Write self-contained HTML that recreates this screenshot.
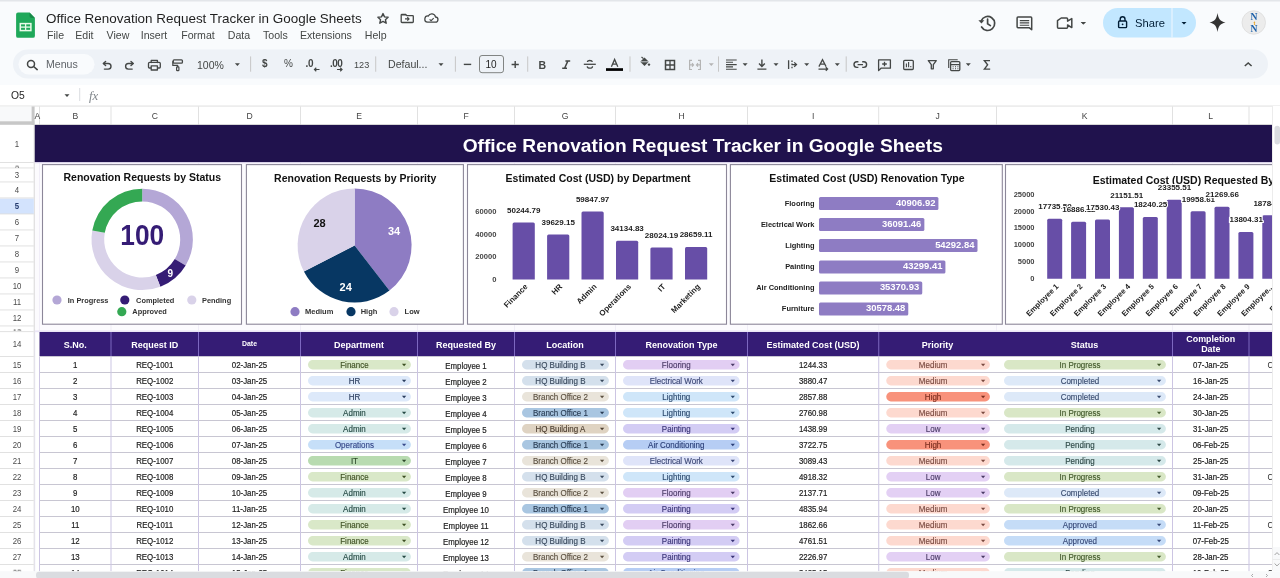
<!DOCTYPE html><html><head><meta charset="utf-8"><style>
*{margin:0;padding:0;box-sizing:border-box}
html,body{width:1280px;height:578px;overflow:hidden;background:#f9fbfd;font-family:"Liberation Sans",sans-serif;position:relative}
.a{position:absolute;white-space:nowrap}
svg{position:absolute;left:0;top:0;will-change:transform}

</style></head><body>
<svg width="1280" height="84" style="left:0;top:0">
<rect x="0" y="0" width="1280" height="1.5" fill="#e3e6ea"/>
<path d="M18 12.5 h11.5 l5.4 5.4 v18 a1.9 1.9 0 0 1 -1.9 1.9 h-15 a1.9 1.9 0 0 1 -1.9 -1.9 v-21.5 a1.9 1.9 0 0 1 1.9 -1.9z" fill="#1fa85a"/>
<path d="M29.5 12.5 l5.4 5.4 h-3.6 a1.8 1.8 0 0 1 -1.8 -1.8z" fill="#178a48"/>
<rect x="20.3" y="23.6" width="10.6" height="7" fill="none" stroke="#e9fbe9" stroke-width="1.5"/>
<line x1="20.3" y1="27.1" x2="30.9" y2="27.1" stroke="#e9fbe9" stroke-width="1.3"/>
<line x1="25.6" y1="23.6" x2="25.6" y2="30.6" stroke="#e9fbe9" stroke-width="1.3"/>
<path d="M383 13.6 l1.5 3.3 3.6.4 -2.7 2.4 .8 3.5 -3.2-1.8 -3.2 1.8 .8-3.5 -2.7-2.4 3.6-.4z" fill="none" stroke="#444746" stroke-width="1.4" stroke-linejoin="round"/>
<path d="M402 14.3 h3.6 l1.3 1.3 h5.6 a0.8 0.8 0 0 1 0.8 0.8 v5.3 a0.8 0.8 0 0 1 -0.8 0.8 h-10.5 a0.8 0.8 0 0 1 -0.8 -0.8 v-6.6 a0.8 0.8 0 0 1 0.8 -0.8z" fill="none" stroke="#444746" stroke-width="1.3"/>
<path d="M401.6 14.3 h4 l1.3 1.3 h-5.3z" fill="#444746"/>
<path d="M405 18.9 h3.8 M407.3 17.2 l1.7 1.7 -1.7 1.7" fill="none" stroke="#444746" stroke-width="1.2"/>
<path d="M427.6 22.2 h7.6 a2.6 2.6 0 0 0 0.3 -5.2 a3.8 3.8 0 0 0 -7.2 -1 a3 3 0 0 0 -0.7 6.2z" fill="none" stroke="#444746" stroke-width="1.3"/>
<path d="M429.6 19.3 l1.5 1.4 2.6 -2.6" fill="none" stroke="#444746" stroke-width="1.1"/>
<g fill="none" stroke="#444746" stroke-width="1.7" stroke-linecap="round">
<path d="M981.2 20.8 A7 7 0 1 1 981.6 27"/><path d="M987.6 19.2 v4.6 l2.8 1.8"/>
</g>
<path d="M978.4 20.2 l3 3.4 3 -3.4z" fill="#444746"/>
<path d="M1018 17 h12.8 a0.9 0.9 0 0 1 0.9 0.9 v11.8 l-2.6 -2 h-11.1 a0.9 0.9 0 0 1 -0.9 -0.9 v-8.9 a0.9 0.9 0 0 1 0.9 -0.9z" fill="none" stroke="#444746" stroke-width="1.5" stroke-linejoin="round"/>
<path d="M1019.8 20.6 h9.4 M1019.8 22.9 h9.4 M1019.8 25.2 h9.4" stroke="#444746" stroke-width="1.1"/>
<path d="M1061.2 18 h5.4 a1 1 0 0 1 1 1 v2.2 l4.2 -2.6 v9 l-4.2 -2.6 v2.2 a1 1 0 0 1 -1 1 h-8.1 a1 1 0 0 1 -1 -1 v-6.5z" fill="none" stroke="#444746" stroke-width="1.5" stroke-linejoin="round"/>
<path d="M1081 22 h5 l-2.5 2.6z" fill="#444746"/>
<rect x="1103" y="8" width="93" height="29.5" rx="14.75" fill="#c2e7ff"/>
<rect x="1171.5" y="8" width="1" height="29.5" fill="#f0f8ff"/>
<path d="M1120.2 21 v-1.8 a2.4 2.4 0 0 1 4.8 0 v1.8" fill="none" stroke="#001d35" stroke-width="1.4"/>
<rect x="1118.6" y="21" width="8" height="6.6" rx="0.9" fill="none" stroke="#001d35" stroke-width="1.4"/>
<circle cx="1122.6" cy="24.3" r="0.9" fill="#001d35"/>
<path d="M1181.5 22 h5 l-2.5 2.6z" fill="#001d35"/>
<path d="M1217.5 13 C1218.5 19 1220 21 1225.5 22.5 C1220 24 1218.5 26 1217.5 32 C1216.5 26 1215 24 1209.5 22.5 C1215 21 1216.5 19 1217.5 13z" fill="#333"/>
<circle cx="1253.75" cy="22.5" r="11.75" fill="#ececec"/>
<circle cx="1253.75" cy="22.5" r="11.75" fill="none" stroke="#dcdcdc" stroke-width="0.8"/>
<text x="1254" y="19.6" font-family="Liberation Serif" font-weight="bold" font-size="9.6" fill="#1b5fa8" text-anchor="middle">N</text>
<text x="1254.3" y="24.6" font-family="Liberation Sans" font-weight="bold" font-size="5.5" fill="#e9a21b" text-anchor="middle">t</text>
<text x="1254" y="32.4" font-family="Liberation Serif" font-weight="bold" font-size="9.6" fill="#1b5fa8" text-anchor="middle">N</text>
<rect x="13" y="49.5" width="1255" height="29" rx="14.5" fill="#eef2f7"/>
<rect x="18.5" y="54" width="76" height="20.5" rx="10.25" fill="#f9fbfd"/>
<g fill="none" stroke="#444746" stroke-width="1.4" stroke-linecap="round" stroke-linejoin="round">
<circle cx="31" cy="63.9" r="3.5" stroke-width="1.5"/><path d="M33.6 66.5 L37.2 69.6" stroke-width="1.6"/>
<path d="M104 63.5 h4.2 a2.8 2.8 0 0 1 0 5.6 h-3.8"/><path d="M105.6 61.4 l-2.3 2.1 2.3 2.1"/>
<path d="M132.6 63.5 h-4.2 a2.8 2.8 0 0 0 0 5.6 h3.8"/><path d="M131 61.4 l2.3 2.1 -2.3 2.1"/>
<path d="M151.2 62.6 v-2.2 h6.2 v2.2" stroke-width="1.3"/>
<path d="M150.6 68 h-1.2 a0.9 0.9 0 0 1 -0.9 -0.9 v-3.6 a1.2 1.2 0 0 1 1.2 -1.2 h9.4 a1.2 1.2 0 0 1 1.2 1.2 v3.6 a0.9 0.9 0 0 1 -0.9 0.9 h-1.2" stroke-width="1.3"/>
<rect x="151.2" y="65.8" width="6.2" height="4.2" stroke-width="1.3"/>
<rect x="173.2" y="59.8" width="9.2" height="3.3" rx="0.9" stroke-width="1.3"/>
<path d="M173.2 61.5 h-0.4 v3.9 h4.9 v1.3" stroke-width="1.2"/>
<rect x="176.6" y="66.8" width="2.3" height="3.8" rx="0.6" stroke-width="1.2"/>
</g>
<rect x="250.1" y="56.4" width="1" height="15.3" fill="#c7c7c7"/>
<rect x="375.2" y="56.4" width="1" height="15.3" fill="#c7c7c7"/>
<rect x="454.9" y="56.4" width="1" height="15.3" fill="#c7c7c7"/>
<rect x="527.2" y="56.4" width="1" height="15.3" fill="#c7c7c7"/>
<rect x="629.5" y="56.4" width="1" height="15.3" fill="#c7c7c7"/>
<rect x="718.0" y="56.4" width="1" height="15.3" fill="#c7c7c7"/>
<rect x="845.7" y="56.4" width="1" height="15.3" fill="#c7c7c7"/>
<path d="M234.9 63.3 h5 l-2.5 2.6z" fill="#444746"/>
<path d="M438.5 63.3 h5 l-2.5 2.6z" fill="#444746"/>
<path d="M708.8 63.3 h5 l-2.5 2.6z" fill="#b4b4b4"/>
<path d="M742.6 63.3 h5 l-2.5 2.6z" fill="#444746"/>
<path d="M773.5 63.3 h5 l-2.5 2.6z" fill="#444746"/>
<path d="M804.2 63.3 h5 l-2.5 2.6z" fill="#444746"/>
<path d="M834.8 63.3 h5 l-2.5 2.6z" fill="#444746"/>
<path d="M965.8 63.3 h5 l-2.5 2.6z" fill="#444746"/>
<path d="M1080.7 22 h5 l-2.5 2.6z" fill="#444746"/>
<rect x="479.5" y="55.5" width="24" height="17.2" rx="2.5" fill="none" stroke="#747775" stroke-width="0.9"/>
<path d="M463.8 64.4 h7.4" stroke="#444746" stroke-width="1.4"/>
<path d="M511.6 64.5 h7.2 M515.2 60.9 v7.2" stroke="#444746" stroke-width="1.4"/>
<path d="M565.4 60.9 h4.8 M562.2 68.3 h4.8 M567.9 60.9 l-3.3 7.4" fill="none" stroke="#444746" stroke-width="1.5"/>
<path d="M583.8 64.3 h12" stroke="#444746" stroke-width="1.3"/>
<path d="M592.4 61.8 c-0.4 -1.6 -5 -2 -5 0.3 M587.2 66.4 c0.2 2.4 5.6 2.4 5.3 -0.2" fill="none" stroke="#444746" stroke-width="1.3"/>
<rect x="606" y="68.2" width="17" height="2.7" fill="#000"/>
<path d="M611.4 66.8 l3.2 -7.4 l3.2 7.4 M612.6 64.2 h4" fill="none" stroke="#444746" stroke-width="1.3"/>
<path d="M640.2 61.8 l4.3 -4.3 l4.3 4.3 l-4.3 4.3z" fill="#444746"/><path d="M640.2 61.8 h8.6" stroke="#eef2f7" stroke-width="0.8"/><circle cx="649" cy="64.6" r="1.2" fill="#444746"/>
<path d="M641.5 57 l2 1.6" stroke="#444746" stroke-width="1.2"/>
<rect x="665.5" y="60.5" width="9" height="9" fill="none" stroke="#444746" stroke-width="1.5"/><path d="M670 60.5 v9 M665.5 65 h9" stroke="#444746" stroke-width="1.3"/>
<g fill="none" stroke="#b4b4b4" stroke-width="1.2"><path d="M692 60.3 h-2.4 v9.2 h2.4 M698 60.3 h2.4 v9.2 h-2.4"/><path d="M689.8 64.9 h3.4 M692 63.2 l1.5 1.7 -1.5 1.7 M700.2 64.9 h-3.4 M698 63.2 l-1.5 1.7 1.5 1.7"/></g>
<path d="M726 60 h10.7 M726 62.3 h7 M726 64.6 h10.7 M726 66.9 h7 M726 69.2 h10.7" stroke="#444746" stroke-width="1.1"/>
<path d="M761.9 59.6 v6.5 M759 63.6 l2.9 2.9 2.9 -2.9 M757.4 69.1 h9" fill="none" stroke="#444746" stroke-width="1.4"/>
<path d="M788.6 60.3 v8.7 M792 60.5 v1.6 M792 63.5 v1.6 M792 66.7 v1.6 M791.5 64.6 h4.8 M794.2 62.4 l2.3 2.2 -2.3 2.2" fill="none" stroke="#444746" stroke-width="1.3"/>
<path d="M818.9 66.6 l3.6 -7 l3.6 7 M820.2 64 h4.6 M818.5 69 h8.8 M825.8 67.3 l1.8 1.7 -1.8 1.7" fill="none" stroke="#444746" stroke-width="1.25"/>
<path d="M858.4 61.8 h-1.6 a2.8 2.8 0 0 0 0 5.6 h1.6 M862.2 61.8 h1.6 a2.8 2.8 0 0 1 0 5.6 h-1.6 M857.6 64.6 h5.4" fill="none" stroke="#444746" stroke-width="1.4"/>
<path d="M878.6 59.8 h11.8 v8.4 h-9.4 l-2.4 2.4z" fill="none" stroke="#444746" stroke-width="1.3" stroke-linejoin="round"/><path d="M884.5 61.7 v4.6 M882.2 64 h4.6" stroke="#444746" stroke-width="1.3"/>
<rect x="903.7" y="60.3" width="9.6" height="9.2" rx="1" fill="none" stroke="#444746" stroke-width="1.3"/><path d="M906.4 63.5 v3.8 M908.6 62 v5.3 M910.8 66 v1.3" stroke="#444746" stroke-width="1.1"/>
<path d="M928.3 60.6 h8 l-3 4 v4.2 h-2 v-4.2z" fill="none" stroke="#444746" stroke-width="1.3" stroke-linejoin="round"/>
<path d="M948.7 68 v-8.3 h9" fill="none" stroke="#444746" stroke-width="1.1"/><rect x="950.6" y="61.6" width="9.2" height="9" rx="1" fill="none" stroke="#444746" stroke-width="1.3"/><path d="M950.6 64.6 h9.2 M952.6 66.8 h1 M955 66.8 h1 M957.4 66.8 h1 M952.6 68.8 h1 M955 68.8 h1 M957.4 68.8 h1" stroke="#444746" stroke-width="1.1"/>
<path d="M990 60.6 h-5.6 l3.2 4.2 -3.2 4.3 h5.8" fill="none" stroke="#444746" stroke-width="1.4"/>
<path d="M1244.8 66 l3.4 -3 3.4 3" fill="none" stroke="#444746" stroke-width="1.5"/>
</svg>
<svg width="1280" height="578" style="left:0;top:0">
<rect x="0" y="85" width="1280" height="21" fill="#ffffff"/>
<rect x="79.2" y="88" width="1" height="13" fill="#dadce0"/>
<path d="M64.5 94.3 h5 l-2.5 2.6z" fill="#444746"/>
<text x="11" y="98.6" font-family="Liberation Sans" font-size="10.3" fill="#1f1f1f">O5</text>
<text x="89" y="99.5" font-family="Liberation Serif" font-style="italic" font-size="12.8" fill="#80868b">fx</text>
<rect x="0" y="106" width="1272" height="19" fill="#ffffff"/>
<rect x="0" y="105.6" width="1280" height="0.9" fill="#dcdcdc"/>
<rect x="0" y="106.5" width="31.6" height="15" fill="#f8f9fa"/>
<rect x="0" y="121.3" width="34.3" height="3.5" fill="#c7c7c7"/>
<rect x="31.6" y="106.5" width="3" height="18.3" fill="#c7c7c7"/>
<rect x="39.1" y="106.5" width="0.8" height="18.5" fill="#dadada"/>
<rect x="110.6" y="106.5" width="0.8" height="18.5" fill="#dadada"/>
<rect x="198.1" y="106.5" width="0.8" height="18.5" fill="#dadada"/>
<rect x="300.1" y="106.5" width="0.8" height="18.5" fill="#dadada"/>
<rect x="417.1" y="106.5" width="0.8" height="18.5" fill="#dadada"/>
<rect x="514.1" y="106.5" width="0.8" height="18.5" fill="#dadada"/>
<rect x="615.1" y="106.5" width="0.8" height="18.5" fill="#dadada"/>
<rect x="747.1" y="106.5" width="0.8" height="18.5" fill="#dadada"/>
<rect x="878.35" y="106.5" width="0.8" height="18.5" fill="#dadada"/>
<rect x="996.1" y="106.5" width="0.8" height="18.5" fill="#dadada"/>
<rect x="1172.1" y="106.5" width="0.8" height="18.5" fill="#dadada"/>
<rect x="1248.6" y="106.5" width="0.8" height="18.5" fill="#dadada"/>
<text x="37.4" y="118.8" font-family="Liberation Sans" font-size="8.6" fill="#444" text-anchor="middle">A</text>
<text x="75.25" y="118.8" font-family="Liberation Sans" font-size="8.6" fill="#444" text-anchor="middle">B</text>
<text x="154.75" y="118.8" font-family="Liberation Sans" font-size="8.6" fill="#444" text-anchor="middle">C</text>
<text x="249.5" y="118.8" font-family="Liberation Sans" font-size="8.6" fill="#444" text-anchor="middle">D</text>
<text x="359.0" y="118.8" font-family="Liberation Sans" font-size="8.6" fill="#444" text-anchor="middle">E</text>
<text x="466.0" y="118.8" font-family="Liberation Sans" font-size="8.6" fill="#444" text-anchor="middle">F</text>
<text x="565.0" y="118.8" font-family="Liberation Sans" font-size="8.6" fill="#444" text-anchor="middle">G</text>
<text x="681.5" y="118.8" font-family="Liberation Sans" font-size="8.6" fill="#444" text-anchor="middle">H</text>
<text x="813.125" y="118.8" font-family="Liberation Sans" font-size="8.6" fill="#444" text-anchor="middle">I</text>
<text x="937.625" y="118.8" font-family="Liberation Sans" font-size="8.6" fill="#444" text-anchor="middle">J</text>
<text x="1084.5" y="118.8" font-family="Liberation Sans" font-size="8.6" fill="#444" text-anchor="middle">K</text>
<text x="1210.75" y="118.8" font-family="Liberation Sans" font-size="8.6" fill="#444" text-anchor="middle">L</text>
<text x="1294.5" y="118.8" font-family="Liberation Sans" font-size="8.6" fill="#444" text-anchor="middle"></text>
<rect x="34.3" y="124.3" width="1238" height="0.8" fill="#c7c7c7"/>
<rect x="0" y="125" width="34.3" height="446.3" fill="#ffffff"/>
<rect x="33.8" y="125" width="1" height="446.3" fill="#c7c7c7"/>
<rect x="0" y="198.5" width="33.8" height="15.5" fill="#d3e3fd"/>
<rect x="0" y="162.0" width="33.8" height="0.9" fill="#dedede"/>
<text transform="translate(17 146.85) scale(0.85 1)" font-family="Liberation Sans" font-size="9.2" fill="#4a4a4a" text-anchor="middle">1</text>
<rect x="0" y="167.5" width="33.8" height="0.9" fill="#dedede"/>
<svg x="0" y="162.5" width="33.8" height="5.0"><text transform="translate(17 9.10) scale(0.85 1)" font-family="Liberation Sans" font-size="9.2" fill="#4a4a4a" text-anchor="middle">2</text></svg>
<rect x="0" y="181.5" width="33.8" height="0.9" fill="#dedede"/>
<text transform="translate(17 178.10) scale(0.85 1)" font-family="Liberation Sans" font-size="9.2" fill="#4a4a4a" text-anchor="middle">3</text>
<rect x="0" y="197.5" width="33.8" height="0.9" fill="#dedede"/>
<text transform="translate(17 193.10) scale(0.85 1)" font-family="Liberation Sans" font-size="9.2" fill="#4a4a4a" text-anchor="middle">4</text>
<rect x="0" y="213.5" width="33.8" height="0.9" fill="#dedede"/>
<text transform="translate(17 209.10) scale(0.85 1)" font-family="Liberation Sans" font-size="9.2" fill="#233a6e" text-anchor="middle" font-weight="bold">5</text>
<rect x="0" y="229.5" width="33.8" height="0.9" fill="#dedede"/>
<text transform="translate(17 225.10) scale(0.85 1)" font-family="Liberation Sans" font-size="9.2" fill="#4a4a4a" text-anchor="middle">6</text>
<rect x="0" y="245.5" width="33.8" height="0.9" fill="#dedede"/>
<text transform="translate(17 241.10) scale(0.85 1)" font-family="Liberation Sans" font-size="9.2" fill="#4a4a4a" text-anchor="middle">7</text>
<rect x="0" y="261.5" width="33.8" height="0.9" fill="#dedede"/>
<text transform="translate(17 257.10) scale(0.85 1)" font-family="Liberation Sans" font-size="9.2" fill="#4a4a4a" text-anchor="middle">8</text>
<rect x="0" y="277.5" width="33.8" height="0.9" fill="#dedede"/>
<text transform="translate(17 273.10) scale(0.85 1)" font-family="Liberation Sans" font-size="9.2" fill="#4a4a4a" text-anchor="middle">9</text>
<rect x="0" y="293.5" width="33.8" height="0.9" fill="#dedede"/>
<text transform="translate(17 289.10) scale(0.85 1)" font-family="Liberation Sans" font-size="9.2" fill="#4a4a4a" text-anchor="middle">10</text>
<rect x="0" y="309.5" width="33.8" height="0.9" fill="#dedede"/>
<text transform="translate(17 305.10) scale(0.85 1)" font-family="Liberation Sans" font-size="9.2" fill="#4a4a4a" text-anchor="middle">11</text>
<rect x="0" y="325.5" width="33.8" height="0.9" fill="#dedede"/>
<text transform="translate(17 321.10) scale(0.85 1)" font-family="Liberation Sans" font-size="9.2" fill="#4a4a4a" text-anchor="middle">12</text>
<rect x="0" y="331.2" width="33.8" height="0.9" fill="#dedede"/>
<svg x="0" y="326" width="33.8" height="5.199999999999989"><text transform="translate(17 9.30) scale(0.85 1)" font-family="Liberation Sans" font-size="9.2" fill="#4a4a4a" text-anchor="middle">13</text></svg>
<rect x="0" y="356.0" width="33.8" height="0.9" fill="#dedede"/>
<text transform="translate(17 347.20) scale(0.85 1)" font-family="Liberation Sans" font-size="9.2" fill="#4a4a4a" text-anchor="middle">14</text>
<rect x="0" y="372.0" width="33.8" height="0.9" fill="#dedede"/>
<text transform="translate(17 367.60) scale(0.85 1)" font-family="Liberation Sans" font-size="9.2" fill="#4a4a4a" text-anchor="middle">15</text>
<rect x="0" y="388.0" width="33.8" height="0.9" fill="#dedede"/>
<text transform="translate(17 383.60) scale(0.85 1)" font-family="Liberation Sans" font-size="9.2" fill="#4a4a4a" text-anchor="middle">16</text>
<rect x="0" y="404.0" width="33.8" height="0.9" fill="#dedede"/>
<text transform="translate(17 399.60) scale(0.85 1)" font-family="Liberation Sans" font-size="9.2" fill="#4a4a4a" text-anchor="middle">17</text>
<rect x="0" y="420.0" width="33.8" height="0.9" fill="#dedede"/>
<text transform="translate(17 415.60) scale(0.85 1)" font-family="Liberation Sans" font-size="9.2" fill="#4a4a4a" text-anchor="middle">18</text>
<rect x="0" y="436.0" width="33.8" height="0.9" fill="#dedede"/>
<text transform="translate(17 431.60) scale(0.85 1)" font-family="Liberation Sans" font-size="9.2" fill="#4a4a4a" text-anchor="middle">19</text>
<rect x="0" y="452.0" width="33.8" height="0.9" fill="#dedede"/>
<text transform="translate(17 447.60) scale(0.85 1)" font-family="Liberation Sans" font-size="9.2" fill="#4a4a4a" text-anchor="middle">20</text>
<rect x="0" y="468.0" width="33.8" height="0.9" fill="#dedede"/>
<text transform="translate(17 463.60) scale(0.85 1)" font-family="Liberation Sans" font-size="9.2" fill="#4a4a4a" text-anchor="middle">21</text>
<rect x="0" y="484.0" width="33.8" height="0.9" fill="#dedede"/>
<text transform="translate(17 479.60) scale(0.85 1)" font-family="Liberation Sans" font-size="9.2" fill="#4a4a4a" text-anchor="middle">22</text>
<rect x="0" y="500.0" width="33.8" height="0.9" fill="#dedede"/>
<text transform="translate(17 495.60) scale(0.85 1)" font-family="Liberation Sans" font-size="9.2" fill="#4a4a4a" text-anchor="middle">23</text>
<rect x="0" y="516.0" width="33.8" height="0.9" fill="#dedede"/>
<text transform="translate(17 511.60) scale(0.85 1)" font-family="Liberation Sans" font-size="9.2" fill="#4a4a4a" text-anchor="middle">24</text>
<rect x="0" y="532.0" width="33.8" height="0.9" fill="#dedede"/>
<text transform="translate(17 527.60) scale(0.85 1)" font-family="Liberation Sans" font-size="9.2" fill="#4a4a4a" text-anchor="middle">25</text>
<rect x="0" y="548.0" width="33.8" height="0.9" fill="#dedede"/>
<text transform="translate(17 543.60) scale(0.85 1)" font-family="Liberation Sans" font-size="9.2" fill="#4a4a4a" text-anchor="middle">26</text>
<rect x="0" y="564.0" width="33.8" height="0.9" fill="#dedede"/>
<text transform="translate(17 559.60) scale(0.85 1)" font-family="Liberation Sans" font-size="9.2" fill="#4a4a4a" text-anchor="middle">27</text>
<svg x="0" y="564.5" width="33.8" height="6.7999999999999545"><text transform="translate(17 11.2) scale(0.85 1)" font-family="Liberation Sans" font-size="9.2" fill="#4a4a4a" text-anchor="middle">28</text></svg>
<rect x="34.8" y="125" width="1237.2" height="446.3" fill="#ffffff"/>
<rect x="34.8" y="162.5" width="1237.2" height="169.5" fill="#fcfbfe"/>
<rect x="39.1" y="162.5" width="0.8" height="169.5" fill="#eeebf6"/>
<rect x="110.6" y="162.5" width="0.8" height="169.5" fill="#eeebf6"/>
<rect x="198.1" y="162.5" width="0.8" height="169.5" fill="#eeebf6"/>
<rect x="300.1" y="162.5" width="0.8" height="169.5" fill="#eeebf6"/>
<rect x="417.1" y="162.5" width="0.8" height="169.5" fill="#eeebf6"/>
<rect x="514.1" y="162.5" width="0.8" height="169.5" fill="#eeebf6"/>
<rect x="615.1" y="162.5" width="0.8" height="169.5" fill="#eeebf6"/>
<rect x="747.1" y="162.5" width="0.8" height="169.5" fill="#eeebf6"/>
<rect x="878.35" y="162.5" width="0.8" height="169.5" fill="#eeebf6"/>
<rect x="996.1" y="162.5" width="0.8" height="169.5" fill="#eeebf6"/>
<rect x="1172.1" y="162.5" width="0.8" height="169.5" fill="#eeebf6"/>
<rect x="1248.6" y="162.5" width="0.8" height="169.5" fill="#eeebf6"/>
<rect x="34.8" y="125" width="1237.2" height="37" fill="#20124d"/>
<rect x="34.8" y="162" width="1237.2" height="1.2" fill="#d9d2e9"/>
<text x="462.7" y="151.6" font-family="Liberation Sans" font-weight="bold" font-size="19.17" fill="#ffffff">Office Renovation Request Tracker in Google Sheets</text>
<rect x="34.8" y="330.4" width="1237.2" height="1.8" fill="#ebe6f6"/>
<rect x="39.5" y="332" width="1232.5" height="24" fill="#351c75"/>
<rect x="110.5" y="332" width="1" height="24" fill="#7d68c0"/>
<rect x="198.0" y="332" width="1" height="24" fill="#7d68c0"/>
<rect x="300.0" y="332" width="1" height="24" fill="#7d68c0"/>
<rect x="417.0" y="332" width="1" height="24" fill="#7d68c0"/>
<rect x="514.0" y="332" width="1" height="24" fill="#7d68c0"/>
<rect x="615.0" y="332" width="1" height="24" fill="#7d68c0"/>
<rect x="747.0" y="332" width="1" height="24" fill="#7d68c0"/>
<rect x="878.25" y="332" width="1" height="24" fill="#7d68c0"/>
<rect x="1172.0" y="332" width="1" height="24" fill="#7d68c0"/>
<rect x="1248.5" y="332" width="1" height="24" fill="#7d68c0"/>
<text x="75.25" y="347.7" font-family="Liberation Sans" font-weight="bold" font-size="9" fill="#ffffff" text-anchor="middle">S.No.</text>
<text x="154.75" y="347.7" font-family="Liberation Sans" font-weight="bold" font-size="9" fill="#ffffff" text-anchor="middle">Request ID</text>
<text x="249.5" y="346.2" font-family="Liberation Sans" font-weight="bold" font-size="6.9" fill="#ffffff" text-anchor="middle">Date</text>
<text x="359.0" y="347.7" font-family="Liberation Sans" font-weight="bold" font-size="9" fill="#ffffff" text-anchor="middle">Department</text>
<text x="466.0" y="347.7" font-family="Liberation Sans" font-weight="bold" font-size="9" fill="#ffffff" text-anchor="middle">Requested By</text>
<text x="565.0" y="347.7" font-family="Liberation Sans" font-weight="bold" font-size="9" fill="#ffffff" text-anchor="middle">Location</text>
<text x="681.5" y="347.7" font-family="Liberation Sans" font-weight="bold" font-size="9" fill="#ffffff" text-anchor="middle">Renovation Type</text>
<text x="813.125" y="347.7" font-family="Liberation Sans" font-weight="bold" font-size="9" fill="#ffffff" text-anchor="middle">Estimated Cost (USD)</text>
<text x="937.625" y="347.7" font-family="Liberation Sans" font-weight="bold" font-size="9" fill="#ffffff" text-anchor="middle">Priority</text>
<text x="1084.5" y="347.7" font-family="Liberation Sans" font-weight="bold" font-size="9" fill="#ffffff" text-anchor="middle">Status</text>
<text x="1210.75" y="342.2" font-family="Liberation Sans" font-weight="bold" font-size="8.9" fill="#ffffff" text-anchor="middle">Completion</text>
<text x="1210.75" y="351.8" font-family="Liberation Sans" font-weight="bold" font-size="8.9" fill="#ffffff" text-anchor="middle">Date</text>
<rect x="39.5" y="356.5" width="1232.5" height="214.8" fill="#ffffff"/>
<rect x="34.8" y="356.5" width="4.7" height="214.8" fill="#ffffff"/>
<rect x="39.5" y="356.0" width="1232.5" height="1" fill="#c8c6d2"/>
<rect x="39.5" y="372.0" width="1232.5" height="1" fill="#c8c6d2"/>
<rect x="39.5" y="388.0" width="1232.5" height="1" fill="#c8c6d2"/>
<rect x="39.5" y="404.0" width="1232.5" height="1" fill="#c8c6d2"/>
<rect x="39.5" y="420.0" width="1232.5" height="1" fill="#c8c6d2"/>
<rect x="39.5" y="436.0" width="1232.5" height="1" fill="#c8c6d2"/>
<rect x="39.5" y="452.0" width="1232.5" height="1" fill="#c8c6d2"/>
<rect x="39.5" y="468.0" width="1232.5" height="1" fill="#c8c6d2"/>
<rect x="39.5" y="484.0" width="1232.5" height="1" fill="#c8c6d2"/>
<rect x="39.5" y="500.0" width="1232.5" height="1" fill="#c8c6d2"/>
<rect x="39.5" y="516.0" width="1232.5" height="1" fill="#c8c6d2"/>
<rect x="39.5" y="532.0" width="1232.5" height="1" fill="#c8c6d2"/>
<rect x="39.5" y="548.0" width="1232.5" height="1" fill="#c8c6d2"/>
<rect x="39.5" y="564.0" width="1232.5" height="1" fill="#c8c6d2"/>
<rect x="39.0" y="356.5" width="1" height="214.8" fill="#ccc5e3"/>
<rect x="110.5" y="356.5" width="1" height="214.8" fill="#ccc5e3"/>
<rect x="198.0" y="356.5" width="1" height="214.8" fill="#ccc5e3"/>
<rect x="300.0" y="356.5" width="1" height="214.8" fill="#ccc5e3"/>
<rect x="417.0" y="356.5" width="1" height="214.8" fill="#ccc5e3"/>
<rect x="514.0" y="356.5" width="1" height="214.8" fill="#ccc5e3"/>
<rect x="615.0" y="356.5" width="1" height="214.8" fill="#ccc5e3"/>
<rect x="747.0" y="356.5" width="1" height="214.8" fill="#ccc5e3"/>
<rect x="878.25" y="356.5" width="1" height="214.8" fill="#ccc5e3"/>
<rect x="1172.0" y="356.5" width="1" height="214.8" fill="#ccc5e3"/>
<rect x="1248.5" y="356.5" width="1" height="214.8" fill="#ccc5e3"/>
<rect x="34.4" y="332" width="0.8" height="239.3" fill="#e6e3f2"/>
<clipPath id="bodyclip"><rect x="34" y="356" width="1238" height="215.3"/></clipPath>
<g clip-path="url(#bodyclip)">
<text transform="translate(75.25 367.70) scale(0.85 1)" font-family="Liberation Sans" font-size="9.25" fill="#222" stroke="#222" stroke-width="0.2" text-anchor="middle">1</text>
<text transform="translate(154.75 367.70) scale(0.85 1)" font-family="Liberation Sans" font-size="9.25" fill="#222" stroke="#222" stroke-width="0.2" text-anchor="middle">REQ-1001</text>
<text transform="translate(249.50 367.70) scale(0.85 1)" font-family="Liberation Sans" font-size="9.25" fill="#222" stroke="#222" stroke-width="0.2" text-anchor="middle">02-Jan-25</text>
<rect x="308.0" y="360.1" width="102.89999999999998" height="9.3" rx="4.65" fill="#d9e8c8"/>
<path d="M401.9 363.8 h4.4 l-2.2 2.4z" fill="#3d4f22"/>
<text transform="translate(354.45 367.60) scale(0.87 1)" font-family="Liberation Sans" font-size="9.2" fill="#3d4f22" stroke="#3d4f22" stroke-width="0.15" text-anchor="middle">Finance</text>
<text transform="translate(466.00 368.70) scale(0.85 1)" font-family="Liberation Sans" font-size="9.25" fill="#222" stroke="#222" stroke-width="0.2" text-anchor="middle">Employee 1</text>
<rect x="522.0" y="360.1" width="86.89999999999998" height="9.3" rx="4.65" fill="#d4e0ec"/>
<path d="M599.9 363.8 h4.4 l-2.2 2.4z" fill="#3a4a5e"/>
<text transform="translate(560.45 367.60) scale(0.87 1)" font-family="Liberation Sans" font-size="9.2" fill="#3a4a5e" stroke="#3a4a5e" stroke-width="0.15" text-anchor="middle">HQ Building B</text>
<rect x="623.0" y="360.1" width="116.60000000000002" height="9.3" rx="4.65" fill="#e2cef3"/>
<path d="M730.6 363.8 h4.4 l-2.2 2.4z" fill="#4a3966"/>
<text transform="translate(676.30 367.60) scale(0.87 1)" font-family="Liberation Sans" font-size="9.2" fill="#4a3966" stroke="#4a3966" stroke-width="0.15" text-anchor="middle">Flooring</text>
<text transform="translate(813.12 367.70) scale(0.85 1)" font-family="Liberation Sans" font-size="9.25" fill="#222" stroke="#222" stroke-width="0.2" text-anchor="middle">1244.33</text>
<rect x="886.25" y="360.1" width="103.64999999999998" height="9.3" rx="4.65" fill="#fdd9cf"/>
<path d="M980.9 363.8 h4.4 l-2.2 2.4z" fill="#7a4a40"/>
<text transform="translate(933.08 367.60) scale(0.87 1)" font-family="Liberation Sans" font-size="9.2" fill="#7a4a40" stroke="#7a4a40" stroke-width="0.15" text-anchor="middle">Medium</text>
<rect x="1004.0" y="360.1" width="161.9000000000001" height="9.3" rx="4.65" fill="#d9e7c6"/>
<path d="M1156.9 363.8 h4.4 l-2.2 2.4z" fill="#42592b"/>
<text transform="translate(1079.95 367.60) scale(0.87 1)" font-family="Liberation Sans" font-size="9.2" fill="#42592b" stroke="#42592b" stroke-width="0.15" text-anchor="middle">In Progress</text>
<text transform="translate(1210.75 367.70) scale(0.85 1)" font-family="Liberation Sans" font-size="9.25" fill="#222" stroke="#222" stroke-width="0.2" text-anchor="middle">07-Jan-25</text>
<text transform="translate(1267.5 367.70) scale(0.85 1)" font-family="Liberation Sans" font-size="9.25" fill="#222">C</text>
<text transform="translate(75.25 383.70) scale(0.85 1)" font-family="Liberation Sans" font-size="9.25" fill="#222" stroke="#222" stroke-width="0.2" text-anchor="middle">2</text>
<text transform="translate(154.75 383.70) scale(0.85 1)" font-family="Liberation Sans" font-size="9.25" fill="#222" stroke="#222" stroke-width="0.2" text-anchor="middle">REQ-1002</text>
<text transform="translate(249.50 383.70) scale(0.85 1)" font-family="Liberation Sans" font-size="9.25" fill="#222" stroke="#222" stroke-width="0.2" text-anchor="middle">03-Jan-25</text>
<rect x="308.0" y="376.1" width="102.89999999999998" height="9.3" rx="4.65" fill="#dde9fa"/>
<path d="M401.9 379.8 h4.4 l-2.2 2.4z" fill="#2a3d5e"/>
<text transform="translate(354.45 383.60) scale(0.87 1)" font-family="Liberation Sans" font-size="9.2" fill="#2a3d5e" stroke="#2a3d5e" stroke-width="0.15" text-anchor="middle">HR</text>
<text transform="translate(466.00 384.70) scale(0.85 1)" font-family="Liberation Sans" font-size="9.25" fill="#222" stroke="#222" stroke-width="0.2" text-anchor="middle">Employee 2</text>
<rect x="522.0" y="376.1" width="86.89999999999998" height="9.3" rx="4.65" fill="#d4e0ec"/>
<path d="M599.9 379.8 h4.4 l-2.2 2.4z" fill="#3a4a5e"/>
<text transform="translate(560.45 383.60) scale(0.87 1)" font-family="Liberation Sans" font-size="9.2" fill="#3a4a5e" stroke="#3a4a5e" stroke-width="0.15" text-anchor="middle">HQ Building B</text>
<rect x="623.0" y="376.1" width="116.60000000000002" height="9.3" rx="4.65" fill="#dfe4f9"/>
<path d="M730.6 379.8 h4.4 l-2.2 2.4z" fill="#3c4877"/>
<text transform="translate(676.30 383.60) scale(0.87 1)" font-family="Liberation Sans" font-size="9.2" fill="#3c4877" stroke="#3c4877" stroke-width="0.15" text-anchor="middle">Electrical Work</text>
<text transform="translate(813.12 383.70) scale(0.85 1)" font-family="Liberation Sans" font-size="9.25" fill="#222" stroke="#222" stroke-width="0.2" text-anchor="middle">3880.47</text>
<rect x="886.25" y="376.1" width="103.64999999999998" height="9.3" rx="4.65" fill="#fdd9cf"/>
<path d="M980.9 379.8 h4.4 l-2.2 2.4z" fill="#7a4a40"/>
<text transform="translate(933.08 383.60) scale(0.87 1)" font-family="Liberation Sans" font-size="9.2" fill="#7a4a40" stroke="#7a4a40" stroke-width="0.15" text-anchor="middle">Medium</text>
<rect x="1004.0" y="376.1" width="161.9000000000001" height="9.3" rx="4.65" fill="#dde9f8"/>
<path d="M1156.9 379.8 h4.4 l-2.2 2.4z" fill="#3a4d70"/>
<text transform="translate(1079.95 383.60) scale(0.87 1)" font-family="Liberation Sans" font-size="9.2" fill="#3a4d70" stroke="#3a4d70" stroke-width="0.15" text-anchor="middle">Completed</text>
<text transform="translate(1210.75 383.70) scale(0.85 1)" font-family="Liberation Sans" font-size="9.25" fill="#222" stroke="#222" stroke-width="0.2" text-anchor="middle">16-Jan-25</text>
<text transform="translate(75.25 399.70) scale(0.85 1)" font-family="Liberation Sans" font-size="9.25" fill="#222" stroke="#222" stroke-width="0.2" text-anchor="middle">3</text>
<text transform="translate(154.75 399.70) scale(0.85 1)" font-family="Liberation Sans" font-size="9.25" fill="#222" stroke="#222" stroke-width="0.2" text-anchor="middle">REQ-1003</text>
<text transform="translate(249.50 399.70) scale(0.85 1)" font-family="Liberation Sans" font-size="9.25" fill="#222" stroke="#222" stroke-width="0.2" text-anchor="middle">04-Jan-25</text>
<rect x="308.0" y="392.1" width="102.89999999999998" height="9.3" rx="4.65" fill="#dde9fa"/>
<path d="M401.9 395.8 h4.4 l-2.2 2.4z" fill="#2a3d5e"/>
<text transform="translate(354.45 399.60) scale(0.87 1)" font-family="Liberation Sans" font-size="9.2" fill="#2a3d5e" stroke="#2a3d5e" stroke-width="0.15" text-anchor="middle">HR</text>
<text transform="translate(466.00 400.70) scale(0.85 1)" font-family="Liberation Sans" font-size="9.25" fill="#222" stroke="#222" stroke-width="0.2" text-anchor="middle">Employee 3</text>
<rect x="522.0" y="392.1" width="86.89999999999998" height="9.3" rx="4.65" fill="#e9e4da"/>
<path d="M599.9 395.8 h4.4 l-2.2 2.4z" fill="#5b5040"/>
<text transform="translate(560.45 399.60) scale(0.87 1)" font-family="Liberation Sans" font-size="9.2" fill="#5b5040" stroke="#5b5040" stroke-width="0.15" text-anchor="middle">Branch Office 2</text>
<rect x="623.0" y="392.1" width="116.60000000000002" height="9.3" rx="4.65" fill="#cfe6f9"/>
<path d="M730.6 395.8 h4.4 l-2.2 2.4z" fill="#2c4a6e"/>
<text transform="translate(676.30 399.60) scale(0.87 1)" font-family="Liberation Sans" font-size="9.2" fill="#2c4a6e" stroke="#2c4a6e" stroke-width="0.15" text-anchor="middle">Lighting</text>
<text transform="translate(813.12 399.70) scale(0.85 1)" font-family="Liberation Sans" font-size="9.25" fill="#222" stroke="#222" stroke-width="0.2" text-anchor="middle">2857.88</text>
<rect x="886.25" y="392.1" width="103.64999999999998" height="9.3" rx="4.65" fill="#f8927b"/>
<path d="M980.9 395.8 h4.4 l-2.2 2.4z" fill="#7a2d1e"/>
<text transform="translate(933.08 399.60) scale(0.87 1)" font-family="Liberation Sans" font-size="9.2" fill="#7a2d1e" stroke="#7a2d1e" stroke-width="0.15" text-anchor="middle">High</text>
<rect x="1004.0" y="392.1" width="161.9000000000001" height="9.3" rx="4.65" fill="#dde9f8"/>
<path d="M1156.9 395.8 h4.4 l-2.2 2.4z" fill="#3a4d70"/>
<text transform="translate(1079.95 399.60) scale(0.87 1)" font-family="Liberation Sans" font-size="9.2" fill="#3a4d70" stroke="#3a4d70" stroke-width="0.15" text-anchor="middle">Completed</text>
<text transform="translate(1210.75 399.70) scale(0.85 1)" font-family="Liberation Sans" font-size="9.25" fill="#222" stroke="#222" stroke-width="0.2" text-anchor="middle">24-Jan-25</text>
<text transform="translate(75.25 415.70) scale(0.85 1)" font-family="Liberation Sans" font-size="9.25" fill="#222" stroke="#222" stroke-width="0.2" text-anchor="middle">4</text>
<text transform="translate(154.75 415.70) scale(0.85 1)" font-family="Liberation Sans" font-size="9.25" fill="#222" stroke="#222" stroke-width="0.2" text-anchor="middle">REQ-1004</text>
<text transform="translate(249.50 415.70) scale(0.85 1)" font-family="Liberation Sans" font-size="9.25" fill="#222" stroke="#222" stroke-width="0.2" text-anchor="middle">05-Jan-25</text>
<rect x="308.0" y="408.1" width="102.89999999999998" height="9.3" rx="4.65" fill="#d6eae8"/>
<path d="M401.9 411.8 h4.4 l-2.2 2.4z" fill="#254a44"/>
<text transform="translate(354.45 415.60) scale(0.87 1)" font-family="Liberation Sans" font-size="9.2" fill="#254a44" stroke="#254a44" stroke-width="0.15" text-anchor="middle">Admin</text>
<text transform="translate(466.00 416.70) scale(0.85 1)" font-family="Liberation Sans" font-size="9.25" fill="#222" stroke="#222" stroke-width="0.2" text-anchor="middle">Employee 4</text>
<rect x="522.0" y="408.1" width="86.89999999999998" height="9.3" rx="4.65" fill="#a9c6e1"/>
<path d="M599.9 411.8 h4.4 l-2.2 2.4z" fill="#293c54"/>
<text transform="translate(560.45 415.60) scale(0.87 1)" font-family="Liberation Sans" font-size="9.2" fill="#293c54" stroke="#293c54" stroke-width="0.15" text-anchor="middle">Branch Office 1</text>
<rect x="623.0" y="408.1" width="116.60000000000002" height="9.3" rx="4.65" fill="#cfe6f9"/>
<path d="M730.6 411.8 h4.4 l-2.2 2.4z" fill="#2c4a6e"/>
<text transform="translate(676.30 415.60) scale(0.87 1)" font-family="Liberation Sans" font-size="9.2" fill="#2c4a6e" stroke="#2c4a6e" stroke-width="0.15" text-anchor="middle">Lighting</text>
<text transform="translate(813.12 415.70) scale(0.85 1)" font-family="Liberation Sans" font-size="9.25" fill="#222" stroke="#222" stroke-width="0.2" text-anchor="middle">2760.98</text>
<rect x="886.25" y="408.1" width="103.64999999999998" height="9.3" rx="4.65" fill="#fdd9cf"/>
<path d="M980.9 411.8 h4.4 l-2.2 2.4z" fill="#7a4a40"/>
<text transform="translate(933.08 415.60) scale(0.87 1)" font-family="Liberation Sans" font-size="9.2" fill="#7a4a40" stroke="#7a4a40" stroke-width="0.15" text-anchor="middle">Medium</text>
<rect x="1004.0" y="408.1" width="161.9000000000001" height="9.3" rx="4.65" fill="#d9e7c6"/>
<path d="M1156.9 411.8 h4.4 l-2.2 2.4z" fill="#42592b"/>
<text transform="translate(1079.95 415.60) scale(0.87 1)" font-family="Liberation Sans" font-size="9.2" fill="#42592b" stroke="#42592b" stroke-width="0.15" text-anchor="middle">In Progress</text>
<text transform="translate(1210.75 415.70) scale(0.85 1)" font-family="Liberation Sans" font-size="9.25" fill="#222" stroke="#222" stroke-width="0.2" text-anchor="middle">30-Jan-25</text>
<text transform="translate(75.25 431.70) scale(0.85 1)" font-family="Liberation Sans" font-size="9.25" fill="#222" stroke="#222" stroke-width="0.2" text-anchor="middle">5</text>
<text transform="translate(154.75 431.70) scale(0.85 1)" font-family="Liberation Sans" font-size="9.25" fill="#222" stroke="#222" stroke-width="0.2" text-anchor="middle">REQ-1005</text>
<text transform="translate(249.50 431.70) scale(0.85 1)" font-family="Liberation Sans" font-size="9.25" fill="#222" stroke="#222" stroke-width="0.2" text-anchor="middle">06-Jan-25</text>
<rect x="308.0" y="424.1" width="102.89999999999998" height="9.3" rx="4.65" fill="#d6eae8"/>
<path d="M401.9 427.8 h4.4 l-2.2 2.4z" fill="#254a44"/>
<text transform="translate(354.45 431.60) scale(0.87 1)" font-family="Liberation Sans" font-size="9.2" fill="#254a44" stroke="#254a44" stroke-width="0.15" text-anchor="middle">Admin</text>
<text transform="translate(466.00 432.70) scale(0.85 1)" font-family="Liberation Sans" font-size="9.25" fill="#222" stroke="#222" stroke-width="0.2" text-anchor="middle">Employee 5</text>
<rect x="522.0" y="424.1" width="86.89999999999998" height="9.3" rx="4.65" fill="#dfd3c2"/>
<path d="M599.9 427.8 h4.4 l-2.2 2.4z" fill="#4e3f30"/>
<text transform="translate(560.45 431.60) scale(0.87 1)" font-family="Liberation Sans" font-size="9.2" fill="#4e3f30" stroke="#4e3f30" stroke-width="0.15" text-anchor="middle">HQ Building A</text>
<rect x="623.0" y="424.1" width="116.60000000000002" height="9.3" rx="4.65" fill="#d3ccf4"/>
<path d="M730.6 427.8 h4.4 l-2.2 2.4z" fill="#393377"/>
<text transform="translate(676.30 431.60) scale(0.87 1)" font-family="Liberation Sans" font-size="9.2" fill="#393377" stroke="#393377" stroke-width="0.15" text-anchor="middle">Painting</text>
<text transform="translate(813.12 431.70) scale(0.85 1)" font-family="Liberation Sans" font-size="9.25" fill="#222" stroke="#222" stroke-width="0.2" text-anchor="middle">1438.99</text>
<rect x="886.25" y="424.1" width="103.64999999999998" height="9.3" rx="4.65" fill="#e3d0f4"/>
<path d="M980.9 427.8 h4.4 l-2.2 2.4z" fill="#4a3a66"/>
<text transform="translate(933.08 431.60) scale(0.87 1)" font-family="Liberation Sans" font-size="9.2" fill="#4a3a66" stroke="#4a3a66" stroke-width="0.15" text-anchor="middle">Low</text>
<rect x="1004.0" y="424.1" width="161.9000000000001" height="9.3" rx="4.65" fill="#d5e9ea"/>
<path d="M1156.9 427.8 h4.4 l-2.2 2.4z" fill="#2e4947"/>
<text transform="translate(1079.95 431.60) scale(0.87 1)" font-family="Liberation Sans" font-size="9.2" fill="#2e4947" stroke="#2e4947" stroke-width="0.15" text-anchor="middle">Pending</text>
<text transform="translate(1210.75 431.70) scale(0.85 1)" font-family="Liberation Sans" font-size="9.25" fill="#222" stroke="#222" stroke-width="0.2" text-anchor="middle">31-Jan-25</text>
<text transform="translate(75.25 447.70) scale(0.85 1)" font-family="Liberation Sans" font-size="9.25" fill="#222" stroke="#222" stroke-width="0.2" text-anchor="middle">6</text>
<text transform="translate(154.75 447.70) scale(0.85 1)" font-family="Liberation Sans" font-size="9.25" fill="#222" stroke="#222" stroke-width="0.2" text-anchor="middle">REQ-1006</text>
<text transform="translate(249.50 447.70) scale(0.85 1)" font-family="Liberation Sans" font-size="9.25" fill="#222" stroke="#222" stroke-width="0.2" text-anchor="middle">07-Jan-25</text>
<rect x="308.0" y="440.1" width="102.89999999999998" height="9.3" rx="4.65" fill="#c6dff8"/>
<path d="M401.9 443.8 h4.4 l-2.2 2.4z" fill="#37498a"/>
<text transform="translate(354.45 447.60) scale(0.87 1)" font-family="Liberation Sans" font-size="9.2" fill="#37498a" stroke="#37498a" stroke-width="0.15" text-anchor="middle">Operations</text>
<text transform="translate(466.00 448.70) scale(0.85 1)" font-family="Liberation Sans" font-size="9.25" fill="#222" stroke="#222" stroke-width="0.2" text-anchor="middle">Employee 6</text>
<rect x="522.0" y="440.1" width="86.89999999999998" height="9.3" rx="4.65" fill="#a9c6e1"/>
<path d="M599.9 443.8 h4.4 l-2.2 2.4z" fill="#293c54"/>
<text transform="translate(560.45 447.60) scale(0.87 1)" font-family="Liberation Sans" font-size="9.2" fill="#293c54" stroke="#293c54" stroke-width="0.15" text-anchor="middle">Branch Office 1</text>
<rect x="623.0" y="440.1" width="116.60000000000002" height="9.3" rx="4.65" fill="#b6cdf4"/>
<path d="M730.6 443.8 h4.4 l-2.2 2.4z" fill="#2a3e77"/>
<text transform="translate(676.30 447.60) scale(0.87 1)" font-family="Liberation Sans" font-size="9.2" fill="#2a3e77" stroke="#2a3e77" stroke-width="0.15" text-anchor="middle">Air Conditioning</text>
<text transform="translate(813.12 447.70) scale(0.85 1)" font-family="Liberation Sans" font-size="9.25" fill="#222" stroke="#222" stroke-width="0.2" text-anchor="middle">3722.75</text>
<rect x="886.25" y="440.1" width="103.64999999999998" height="9.3" rx="4.65" fill="#f8927b"/>
<path d="M980.9 443.8 h4.4 l-2.2 2.4z" fill="#7a2d1e"/>
<text transform="translate(933.08 447.60) scale(0.87 1)" font-family="Liberation Sans" font-size="9.2" fill="#7a2d1e" stroke="#7a2d1e" stroke-width="0.15" text-anchor="middle">High</text>
<rect x="1004.0" y="440.1" width="161.9000000000001" height="9.3" rx="4.65" fill="#d5e9ea"/>
<path d="M1156.9 443.8 h4.4 l-2.2 2.4z" fill="#2e4947"/>
<text transform="translate(1079.95 447.60) scale(0.87 1)" font-family="Liberation Sans" font-size="9.2" fill="#2e4947" stroke="#2e4947" stroke-width="0.15" text-anchor="middle">Pending</text>
<text transform="translate(1210.75 447.70) scale(0.85 1)" font-family="Liberation Sans" font-size="9.25" fill="#222" stroke="#222" stroke-width="0.2" text-anchor="middle">06-Feb-25</text>
<text transform="translate(75.25 463.70) scale(0.85 1)" font-family="Liberation Sans" font-size="9.25" fill="#222" stroke="#222" stroke-width="0.2" text-anchor="middle">7</text>
<text transform="translate(154.75 463.70) scale(0.85 1)" font-family="Liberation Sans" font-size="9.25" fill="#222" stroke="#222" stroke-width="0.2" text-anchor="middle">REQ-1007</text>
<text transform="translate(249.50 463.70) scale(0.85 1)" font-family="Liberation Sans" font-size="9.25" fill="#222" stroke="#222" stroke-width="0.2" text-anchor="middle">08-Jan-25</text>
<rect x="308.0" y="456.1" width="102.89999999999998" height="9.3" rx="4.65" fill="#b8dbb0"/>
<path d="M401.9 459.8 h4.4 l-2.2 2.4z" fill="#2b4827"/>
<text transform="translate(354.45 463.60) scale(0.87 1)" font-family="Liberation Sans" font-size="9.2" fill="#2b4827" stroke="#2b4827" stroke-width="0.15" text-anchor="middle">IT</text>
<text transform="translate(466.00 464.70) scale(0.85 1)" font-family="Liberation Sans" font-size="9.25" fill="#222" stroke="#222" stroke-width="0.2" text-anchor="middle">Employee 7</text>
<rect x="522.0" y="456.1" width="86.89999999999998" height="9.3" rx="4.65" fill="#e9e4da"/>
<path d="M599.9 459.8 h4.4 l-2.2 2.4z" fill="#5b5040"/>
<text transform="translate(560.45 463.60) scale(0.87 1)" font-family="Liberation Sans" font-size="9.2" fill="#5b5040" stroke="#5b5040" stroke-width="0.15" text-anchor="middle">Branch Office 2</text>
<rect x="623.0" y="456.1" width="116.60000000000002" height="9.3" rx="4.65" fill="#dfe4f9"/>
<path d="M730.6 459.8 h4.4 l-2.2 2.4z" fill="#3c4877"/>
<text transform="translate(676.30 463.60) scale(0.87 1)" font-family="Liberation Sans" font-size="9.2" fill="#3c4877" stroke="#3c4877" stroke-width="0.15" text-anchor="middle">Electrical Work</text>
<text transform="translate(813.12 463.70) scale(0.85 1)" font-family="Liberation Sans" font-size="9.25" fill="#222" stroke="#222" stroke-width="0.2" text-anchor="middle">3089.43</text>
<rect x="886.25" y="456.1" width="103.64999999999998" height="9.3" rx="4.65" fill="#fdd9cf"/>
<path d="M980.9 459.8 h4.4 l-2.2 2.4z" fill="#7a4a40"/>
<text transform="translate(933.08 463.60) scale(0.87 1)" font-family="Liberation Sans" font-size="9.2" fill="#7a4a40" stroke="#7a4a40" stroke-width="0.15" text-anchor="middle">Medium</text>
<rect x="1004.0" y="456.1" width="161.9000000000001" height="9.3" rx="4.65" fill="#d5e9ea"/>
<path d="M1156.9 459.8 h4.4 l-2.2 2.4z" fill="#2e4947"/>
<text transform="translate(1079.95 463.60) scale(0.87 1)" font-family="Liberation Sans" font-size="9.2" fill="#2e4947" stroke="#2e4947" stroke-width="0.15" text-anchor="middle">Pending</text>
<text transform="translate(1210.75 463.70) scale(0.85 1)" font-family="Liberation Sans" font-size="9.25" fill="#222" stroke="#222" stroke-width="0.2" text-anchor="middle">25-Jan-25</text>
<text transform="translate(75.25 479.70) scale(0.85 1)" font-family="Liberation Sans" font-size="9.25" fill="#222" stroke="#222" stroke-width="0.2" text-anchor="middle">8</text>
<text transform="translate(154.75 479.70) scale(0.85 1)" font-family="Liberation Sans" font-size="9.25" fill="#222" stroke="#222" stroke-width="0.2" text-anchor="middle">REQ-1008</text>
<text transform="translate(249.50 479.70) scale(0.85 1)" font-family="Liberation Sans" font-size="9.25" fill="#222" stroke="#222" stroke-width="0.2" text-anchor="middle">09-Jan-25</text>
<rect x="308.0" y="472.1" width="102.89999999999998" height="9.3" rx="4.65" fill="#d9e8c8"/>
<path d="M401.9 475.8 h4.4 l-2.2 2.4z" fill="#3d4f22"/>
<text transform="translate(354.45 479.60) scale(0.87 1)" font-family="Liberation Sans" font-size="9.2" fill="#3d4f22" stroke="#3d4f22" stroke-width="0.15" text-anchor="middle">Finance</text>
<text transform="translate(466.00 480.70) scale(0.85 1)" font-family="Liberation Sans" font-size="9.25" fill="#222" stroke="#222" stroke-width="0.2" text-anchor="middle">Employee 8</text>
<rect x="522.0" y="472.1" width="86.89999999999998" height="9.3" rx="4.65" fill="#d4e0ec"/>
<path d="M599.9 475.8 h4.4 l-2.2 2.4z" fill="#3a4a5e"/>
<text transform="translate(560.45 479.60) scale(0.87 1)" font-family="Liberation Sans" font-size="9.2" fill="#3a4a5e" stroke="#3a4a5e" stroke-width="0.15" text-anchor="middle">HQ Building B</text>
<rect x="623.0" y="472.1" width="116.60000000000002" height="9.3" rx="4.65" fill="#cfe6f9"/>
<path d="M730.6 475.8 h4.4 l-2.2 2.4z" fill="#2c4a6e"/>
<text transform="translate(676.30 479.60) scale(0.87 1)" font-family="Liberation Sans" font-size="9.2" fill="#2c4a6e" stroke="#2c4a6e" stroke-width="0.15" text-anchor="middle">Lighting</text>
<text transform="translate(813.12 479.70) scale(0.85 1)" font-family="Liberation Sans" font-size="9.25" fill="#222" stroke="#222" stroke-width="0.2" text-anchor="middle">4918.32</text>
<rect x="886.25" y="472.1" width="103.64999999999998" height="9.3" rx="4.65" fill="#e3d0f4"/>
<path d="M980.9 475.8 h4.4 l-2.2 2.4z" fill="#4a3a66"/>
<text transform="translate(933.08 479.60) scale(0.87 1)" font-family="Liberation Sans" font-size="9.2" fill="#4a3a66" stroke="#4a3a66" stroke-width="0.15" text-anchor="middle">Low</text>
<rect x="1004.0" y="472.1" width="161.9000000000001" height="9.3" rx="4.65" fill="#d9e7c6"/>
<path d="M1156.9 475.8 h4.4 l-2.2 2.4z" fill="#42592b"/>
<text transform="translate(1079.95 479.60) scale(0.87 1)" font-family="Liberation Sans" font-size="9.2" fill="#42592b" stroke="#42592b" stroke-width="0.15" text-anchor="middle">In Progress</text>
<text transform="translate(1210.75 479.70) scale(0.85 1)" font-family="Liberation Sans" font-size="9.25" fill="#222" stroke="#222" stroke-width="0.2" text-anchor="middle">31-Jan-25</text>
<text transform="translate(1267.5 479.70) scale(0.85 1)" font-family="Liberation Sans" font-size="9.25" fill="#222">C</text>
<text transform="translate(75.25 495.70) scale(0.85 1)" font-family="Liberation Sans" font-size="9.25" fill="#222" stroke="#222" stroke-width="0.2" text-anchor="middle">9</text>
<text transform="translate(154.75 495.70) scale(0.85 1)" font-family="Liberation Sans" font-size="9.25" fill="#222" stroke="#222" stroke-width="0.2" text-anchor="middle">REQ-1009</text>
<text transform="translate(249.50 495.70) scale(0.85 1)" font-family="Liberation Sans" font-size="9.25" fill="#222" stroke="#222" stroke-width="0.2" text-anchor="middle">10-Jan-25</text>
<rect x="308.0" y="488.1" width="102.89999999999998" height="9.3" rx="4.65" fill="#d6eae8"/>
<path d="M401.9 491.8 h4.4 l-2.2 2.4z" fill="#254a44"/>
<text transform="translate(354.45 495.60) scale(0.87 1)" font-family="Liberation Sans" font-size="9.2" fill="#254a44" stroke="#254a44" stroke-width="0.15" text-anchor="middle">Admin</text>
<text transform="translate(466.00 496.70) scale(0.85 1)" font-family="Liberation Sans" font-size="9.25" fill="#222" stroke="#222" stroke-width="0.2" text-anchor="middle">Employee 9</text>
<rect x="522.0" y="488.1" width="86.89999999999998" height="9.3" rx="4.65" fill="#e9e4da"/>
<path d="M599.9 491.8 h4.4 l-2.2 2.4z" fill="#5b5040"/>
<text transform="translate(560.45 495.60) scale(0.87 1)" font-family="Liberation Sans" font-size="9.2" fill="#5b5040" stroke="#5b5040" stroke-width="0.15" text-anchor="middle">Branch Office 2</text>
<rect x="623.0" y="488.1" width="116.60000000000002" height="9.3" rx="4.65" fill="#e2cef3"/>
<path d="M730.6 491.8 h4.4 l-2.2 2.4z" fill="#4a3966"/>
<text transform="translate(676.30 495.60) scale(0.87 1)" font-family="Liberation Sans" font-size="9.2" fill="#4a3966" stroke="#4a3966" stroke-width="0.15" text-anchor="middle">Flooring</text>
<text transform="translate(813.12 495.70) scale(0.85 1)" font-family="Liberation Sans" font-size="9.25" fill="#222" stroke="#222" stroke-width="0.2" text-anchor="middle">2137.71</text>
<rect x="886.25" y="488.1" width="103.64999999999998" height="9.3" rx="4.65" fill="#e3d0f4"/>
<path d="M980.9 491.8 h4.4 l-2.2 2.4z" fill="#4a3a66"/>
<text transform="translate(933.08 495.60) scale(0.87 1)" font-family="Liberation Sans" font-size="9.2" fill="#4a3a66" stroke="#4a3a66" stroke-width="0.15" text-anchor="middle">Low</text>
<rect x="1004.0" y="488.1" width="161.9000000000001" height="9.3" rx="4.65" fill="#dde9f8"/>
<path d="M1156.9 491.8 h4.4 l-2.2 2.4z" fill="#3a4d70"/>
<text transform="translate(1079.95 495.60) scale(0.87 1)" font-family="Liberation Sans" font-size="9.2" fill="#3a4d70" stroke="#3a4d70" stroke-width="0.15" text-anchor="middle">Completed</text>
<text transform="translate(1210.75 495.70) scale(0.85 1)" font-family="Liberation Sans" font-size="9.25" fill="#222" stroke="#222" stroke-width="0.2" text-anchor="middle">09-Feb-25</text>
<text transform="translate(75.25 511.70) scale(0.85 1)" font-family="Liberation Sans" font-size="9.25" fill="#222" stroke="#222" stroke-width="0.2" text-anchor="middle">10</text>
<text transform="translate(154.75 511.70) scale(0.85 1)" font-family="Liberation Sans" font-size="9.25" fill="#222" stroke="#222" stroke-width="0.2" text-anchor="middle">REQ-1010</text>
<text transform="translate(249.50 511.70) scale(0.85 1)" font-family="Liberation Sans" font-size="9.25" fill="#222" stroke="#222" stroke-width="0.2" text-anchor="middle">11-Jan-25</text>
<rect x="308.0" y="504.1" width="102.89999999999998" height="9.3" rx="4.65" fill="#d6eae8"/>
<path d="M401.9 507.8 h4.4 l-2.2 2.4z" fill="#254a44"/>
<text transform="translate(354.45 511.60) scale(0.87 1)" font-family="Liberation Sans" font-size="9.2" fill="#254a44" stroke="#254a44" stroke-width="0.15" text-anchor="middle">Admin</text>
<text transform="translate(466.00 512.70) scale(0.85 1)" font-family="Liberation Sans" font-size="9.25" fill="#222" stroke="#222" stroke-width="0.2" text-anchor="middle">Employee 10</text>
<rect x="522.0" y="504.1" width="86.89999999999998" height="9.3" rx="4.65" fill="#a9c6e1"/>
<path d="M599.9 507.8 h4.4 l-2.2 2.4z" fill="#293c54"/>
<text transform="translate(560.45 511.60) scale(0.87 1)" font-family="Liberation Sans" font-size="9.2" fill="#293c54" stroke="#293c54" stroke-width="0.15" text-anchor="middle">Branch Office 1</text>
<rect x="623.0" y="504.1" width="116.60000000000002" height="9.3" rx="4.65" fill="#d3ccf4"/>
<path d="M730.6 507.8 h4.4 l-2.2 2.4z" fill="#393377"/>
<text transform="translate(676.30 511.60) scale(0.87 1)" font-family="Liberation Sans" font-size="9.2" fill="#393377" stroke="#393377" stroke-width="0.15" text-anchor="middle">Painting</text>
<text transform="translate(813.12 511.70) scale(0.85 1)" font-family="Liberation Sans" font-size="9.25" fill="#222" stroke="#222" stroke-width="0.2" text-anchor="middle">4835.94</text>
<rect x="886.25" y="504.1" width="103.64999999999998" height="9.3" rx="4.65" fill="#fdd9cf"/>
<path d="M980.9 507.8 h4.4 l-2.2 2.4z" fill="#7a4a40"/>
<text transform="translate(933.08 511.60) scale(0.87 1)" font-family="Liberation Sans" font-size="9.2" fill="#7a4a40" stroke="#7a4a40" stroke-width="0.15" text-anchor="middle">Medium</text>
<rect x="1004.0" y="504.1" width="161.9000000000001" height="9.3" rx="4.65" fill="#d9e7c6"/>
<path d="M1156.9 507.8 h4.4 l-2.2 2.4z" fill="#42592b"/>
<text transform="translate(1079.95 511.60) scale(0.87 1)" font-family="Liberation Sans" font-size="9.2" fill="#42592b" stroke="#42592b" stroke-width="0.15" text-anchor="middle">In Progress</text>
<text transform="translate(1210.75 511.70) scale(0.85 1)" font-family="Liberation Sans" font-size="9.25" fill="#222" stroke="#222" stroke-width="0.2" text-anchor="middle">20-Jan-25</text>
<text transform="translate(75.25 527.70) scale(0.85 1)" font-family="Liberation Sans" font-size="9.25" fill="#222" stroke="#222" stroke-width="0.2" text-anchor="middle">11</text>
<text transform="translate(154.75 527.70) scale(0.85 1)" font-family="Liberation Sans" font-size="9.25" fill="#222" stroke="#222" stroke-width="0.2" text-anchor="middle">REQ-1011</text>
<text transform="translate(249.50 527.70) scale(0.85 1)" font-family="Liberation Sans" font-size="9.25" fill="#222" stroke="#222" stroke-width="0.2" text-anchor="middle">12-Jan-25</text>
<rect x="308.0" y="520.1" width="102.89999999999998" height="9.3" rx="4.65" fill="#d9e8c8"/>
<path d="M401.9 523.8 h4.4 l-2.2 2.4z" fill="#3d4f22"/>
<text transform="translate(354.45 527.60) scale(0.87 1)" font-family="Liberation Sans" font-size="9.2" fill="#3d4f22" stroke="#3d4f22" stroke-width="0.15" text-anchor="middle">Finance</text>
<text transform="translate(466.00 528.70) scale(0.85 1)" font-family="Liberation Sans" font-size="9.25" fill="#222" stroke="#222" stroke-width="0.2" text-anchor="middle">Employee 11</text>
<rect x="522.0" y="520.1" width="86.89999999999998" height="9.3" rx="4.65" fill="#d4e0ec"/>
<path d="M599.9 523.8 h4.4 l-2.2 2.4z" fill="#3a4a5e"/>
<text transform="translate(560.45 527.60) scale(0.87 1)" font-family="Liberation Sans" font-size="9.2" fill="#3a4a5e" stroke="#3a4a5e" stroke-width="0.15" text-anchor="middle">HQ Building B</text>
<rect x="623.0" y="520.1" width="116.60000000000002" height="9.3" rx="4.65" fill="#e2cef3"/>
<path d="M730.6 523.8 h4.4 l-2.2 2.4z" fill="#4a3966"/>
<text transform="translate(676.30 527.60) scale(0.87 1)" font-family="Liberation Sans" font-size="9.2" fill="#4a3966" stroke="#4a3966" stroke-width="0.15" text-anchor="middle">Flooring</text>
<text transform="translate(813.12 527.70) scale(0.85 1)" font-family="Liberation Sans" font-size="9.25" fill="#222" stroke="#222" stroke-width="0.2" text-anchor="middle">1862.66</text>
<rect x="886.25" y="520.1" width="103.64999999999998" height="9.3" rx="4.65" fill="#fdd9cf"/>
<path d="M980.9 523.8 h4.4 l-2.2 2.4z" fill="#7a4a40"/>
<text transform="translate(933.08 527.60) scale(0.87 1)" font-family="Liberation Sans" font-size="9.2" fill="#7a4a40" stroke="#7a4a40" stroke-width="0.15" text-anchor="middle">Medium</text>
<rect x="1004.0" y="520.1" width="161.9000000000001" height="9.3" rx="4.65" fill="#c5dcf7"/>
<path d="M1156.9 523.8 h4.4 l-2.2 2.4z" fill="#394b7a"/>
<text transform="translate(1079.95 527.60) scale(0.87 1)" font-family="Liberation Sans" font-size="9.2" fill="#394b7a" stroke="#394b7a" stroke-width="0.15" text-anchor="middle">Approved</text>
<text transform="translate(1210.75 527.70) scale(0.85 1)" font-family="Liberation Sans" font-size="9.25" fill="#222" stroke="#222" stroke-width="0.2" text-anchor="middle">11-Feb-25</text>
<text transform="translate(1267.5 527.70) scale(0.85 1)" font-family="Liberation Sans" font-size="9.25" fill="#222">C</text>
<text transform="translate(75.25 543.70) scale(0.85 1)" font-family="Liberation Sans" font-size="9.25" fill="#222" stroke="#222" stroke-width="0.2" text-anchor="middle">12</text>
<text transform="translate(154.75 543.70) scale(0.85 1)" font-family="Liberation Sans" font-size="9.25" fill="#222" stroke="#222" stroke-width="0.2" text-anchor="middle">REQ-1012</text>
<text transform="translate(249.50 543.70) scale(0.85 1)" font-family="Liberation Sans" font-size="9.25" fill="#222" stroke="#222" stroke-width="0.2" text-anchor="middle">13-Jan-25</text>
<rect x="308.0" y="536.1" width="102.89999999999998" height="9.3" rx="4.65" fill="#d9e8c8"/>
<path d="M401.9 539.8 h4.4 l-2.2 2.4z" fill="#3d4f22"/>
<text transform="translate(354.45 543.60) scale(0.87 1)" font-family="Liberation Sans" font-size="9.2" fill="#3d4f22" stroke="#3d4f22" stroke-width="0.15" text-anchor="middle">Finance</text>
<text transform="translate(466.00 544.70) scale(0.85 1)" font-family="Liberation Sans" font-size="9.25" fill="#222" stroke="#222" stroke-width="0.2" text-anchor="middle">Employee 12</text>
<rect x="522.0" y="536.1" width="86.89999999999998" height="9.3" rx="4.65" fill="#d4e0ec"/>
<path d="M599.9 539.8 h4.4 l-2.2 2.4z" fill="#3a4a5e"/>
<text transform="translate(560.45 543.60) scale(0.87 1)" font-family="Liberation Sans" font-size="9.2" fill="#3a4a5e" stroke="#3a4a5e" stroke-width="0.15" text-anchor="middle">HQ Building B</text>
<rect x="623.0" y="536.1" width="116.60000000000002" height="9.3" rx="4.65" fill="#d3ccf4"/>
<path d="M730.6 539.8 h4.4 l-2.2 2.4z" fill="#393377"/>
<text transform="translate(676.30 543.60) scale(0.87 1)" font-family="Liberation Sans" font-size="9.2" fill="#393377" stroke="#393377" stroke-width="0.15" text-anchor="middle">Painting</text>
<text transform="translate(813.12 543.70) scale(0.85 1)" font-family="Liberation Sans" font-size="9.25" fill="#222" stroke="#222" stroke-width="0.2" text-anchor="middle">4761.51</text>
<rect x="886.25" y="536.1" width="103.64999999999998" height="9.3" rx="4.65" fill="#fdd9cf"/>
<path d="M980.9 539.8 h4.4 l-2.2 2.4z" fill="#7a4a40"/>
<text transform="translate(933.08 543.60) scale(0.87 1)" font-family="Liberation Sans" font-size="9.2" fill="#7a4a40" stroke="#7a4a40" stroke-width="0.15" text-anchor="middle">Medium</text>
<rect x="1004.0" y="536.1" width="161.9000000000001" height="9.3" rx="4.65" fill="#c5dcf7"/>
<path d="M1156.9 539.8 h4.4 l-2.2 2.4z" fill="#394b7a"/>
<text transform="translate(1079.95 543.60) scale(0.87 1)" font-family="Liberation Sans" font-size="9.2" fill="#394b7a" stroke="#394b7a" stroke-width="0.15" text-anchor="middle">Approved</text>
<text transform="translate(1210.75 543.70) scale(0.85 1)" font-family="Liberation Sans" font-size="9.25" fill="#222" stroke="#222" stroke-width="0.2" text-anchor="middle">07-Feb-25</text>
<text transform="translate(75.25 559.70) scale(0.85 1)" font-family="Liberation Sans" font-size="9.25" fill="#222" stroke="#222" stroke-width="0.2" text-anchor="middle">13</text>
<text transform="translate(154.75 559.70) scale(0.85 1)" font-family="Liberation Sans" font-size="9.25" fill="#222" stroke="#222" stroke-width="0.2" text-anchor="middle">REQ-1013</text>
<text transform="translate(249.50 559.70) scale(0.85 1)" font-family="Liberation Sans" font-size="9.25" fill="#222" stroke="#222" stroke-width="0.2" text-anchor="middle">14-Jan-25</text>
<rect x="308.0" y="552.1" width="102.89999999999998" height="9.3" rx="4.65" fill="#d6eae8"/>
<path d="M401.9 555.8 h4.4 l-2.2 2.4z" fill="#254a44"/>
<text transform="translate(354.45 559.60) scale(0.87 1)" font-family="Liberation Sans" font-size="9.2" fill="#254a44" stroke="#254a44" stroke-width="0.15" text-anchor="middle">Admin</text>
<text transform="translate(466.00 560.70) scale(0.85 1)" font-family="Liberation Sans" font-size="9.25" fill="#222" stroke="#222" stroke-width="0.2" text-anchor="middle">Employee 13</text>
<rect x="522.0" y="552.1" width="86.89999999999998" height="9.3" rx="4.65" fill="#e9e4da"/>
<path d="M599.9 555.8 h4.4 l-2.2 2.4z" fill="#5b5040"/>
<text transform="translate(560.45 559.60) scale(0.87 1)" font-family="Liberation Sans" font-size="9.2" fill="#5b5040" stroke="#5b5040" stroke-width="0.15" text-anchor="middle">Branch Office 2</text>
<rect x="623.0" y="552.1" width="116.60000000000002" height="9.3" rx="4.65" fill="#d3ccf4"/>
<path d="M730.6 555.8 h4.4 l-2.2 2.4z" fill="#393377"/>
<text transform="translate(676.30 559.60) scale(0.87 1)" font-family="Liberation Sans" font-size="9.2" fill="#393377" stroke="#393377" stroke-width="0.15" text-anchor="middle">Painting</text>
<text transform="translate(813.12 559.70) scale(0.85 1)" font-family="Liberation Sans" font-size="9.25" fill="#222" stroke="#222" stroke-width="0.2" text-anchor="middle">2226.97</text>
<rect x="886.25" y="552.1" width="103.64999999999998" height="9.3" rx="4.65" fill="#e3d0f4"/>
<path d="M980.9 555.8 h4.4 l-2.2 2.4z" fill="#4a3a66"/>
<text transform="translate(933.08 559.60) scale(0.87 1)" font-family="Liberation Sans" font-size="9.2" fill="#4a3a66" stroke="#4a3a66" stroke-width="0.15" text-anchor="middle">Low</text>
<rect x="1004.0" y="552.1" width="161.9000000000001" height="9.3" rx="4.65" fill="#d9e7c6"/>
<path d="M1156.9 555.8 h4.4 l-2.2 2.4z" fill="#42592b"/>
<text transform="translate(1079.95 559.60) scale(0.87 1)" font-family="Liberation Sans" font-size="9.2" fill="#42592b" stroke="#42592b" stroke-width="0.15" text-anchor="middle">In Progress</text>
<text transform="translate(1210.75 559.70) scale(0.85 1)" font-family="Liberation Sans" font-size="9.25" fill="#222" stroke="#222" stroke-width="0.2" text-anchor="middle">28-Jan-25</text>
<text transform="translate(75.25 575.70) scale(0.85 1)" font-family="Liberation Sans" font-size="9.25" fill="#222" stroke="#222" stroke-width="0.2" text-anchor="middle">14</text>
<text transform="translate(154.75 575.70) scale(0.85 1)" font-family="Liberation Sans" font-size="9.25" fill="#222" stroke="#222" stroke-width="0.2" text-anchor="middle">REQ-1014</text>
<text transform="translate(249.50 575.70) scale(0.85 1)" font-family="Liberation Sans" font-size="9.25" fill="#222" stroke="#222" stroke-width="0.2" text-anchor="middle">15-Jan-25</text>
<rect x="308.0" y="568.1" width="102.89999999999998" height="9.3" rx="4.65" fill="#d9e8c8"/>
<path d="M401.9 571.8 h4.4 l-2.2 2.4z" fill="#3d4f22"/>
<text transform="translate(354.45 575.60) scale(0.87 1)" font-family="Liberation Sans" font-size="9.2" fill="#3d4f22" stroke="#3d4f22" stroke-width="0.15" text-anchor="middle">Finance</text>
<text transform="translate(466.00 576.70) scale(0.85 1)" font-family="Liberation Sans" font-size="9.25" fill="#222" stroke="#222" stroke-width="0.2" text-anchor="middle">Employee 14</text>
<rect x="522.0" y="568.1" width="86.89999999999998" height="9.3" rx="4.65" fill="#a9c6e1"/>
<path d="M599.9 571.8 h4.4 l-2.2 2.4z" fill="#293c54"/>
<text transform="translate(560.45 575.60) scale(0.87 1)" font-family="Liberation Sans" font-size="9.2" fill="#293c54" stroke="#293c54" stroke-width="0.15" text-anchor="middle">Branch Office 1</text>
<rect x="623.0" y="568.1" width="116.60000000000002" height="9.3" rx="4.65" fill="#b6cdf4"/>
<path d="M730.6 571.8 h4.4 l-2.2 2.4z" fill="#2a3e77"/>
<text transform="translate(676.30 575.60) scale(0.87 1)" font-family="Liberation Sans" font-size="9.2" fill="#2a3e77" stroke="#2a3e77" stroke-width="0.15" text-anchor="middle">Air Conditioning</text>
<text transform="translate(813.12 575.70) scale(0.85 1)" font-family="Liberation Sans" font-size="9.25" fill="#222" stroke="#222" stroke-width="0.2" text-anchor="middle">3425.15</text>
<rect x="886.25" y="568.1" width="103.64999999999998" height="9.3" rx="4.65" fill="#fdd9cf"/>
<path d="M980.9 571.8 h4.4 l-2.2 2.4z" fill="#7a4a40"/>
<text transform="translate(933.08 575.60) scale(0.87 1)" font-family="Liberation Sans" font-size="9.2" fill="#7a4a40" stroke="#7a4a40" stroke-width="0.15" text-anchor="middle">Medium</text>
<rect x="1004.0" y="568.1" width="161.9000000000001" height="9.3" rx="4.65" fill="#d5e9ea"/>
<path d="M1156.9 571.8 h4.4 l-2.2 2.4z" fill="#2e4947"/>
<text transform="translate(1079.95 575.60) scale(0.87 1)" font-family="Liberation Sans" font-size="9.2" fill="#2e4947" stroke="#2e4947" stroke-width="0.15" text-anchor="middle">Pending</text>
<text transform="translate(1210.75 575.70) scale(0.85 1)" font-family="Liberation Sans" font-size="9.25" fill="#222" stroke="#222" stroke-width="0.2" text-anchor="middle">10-Feb-25</text>
<text transform="translate(1267.5 575.70) scale(0.85 1)" font-family="Liberation Sans" font-size="9.25" fill="#222">C</text>
</g>
<rect x="1272" y="106" width="8" height="472" fill="#ffffff"/>
<rect x="1272" y="106" width="0.8" height="464" fill="#e8e8e8"/>
<rect x="1274.5" y="125.7" width="5.5" height="18.7" rx="2.75" fill="#dadce0"/>
<rect x="1272.8" y="547" width="7.2" height="24.3" fill="#f8f9fa"/>
<rect x="1272.8" y="559" width="7.2" height="0.6" fill="#e3e3e3"/>
<path d="M1274.6 555 l2.4 -2.4 2.4 2.4" fill="none" stroke="#8a8a8a" stroke-width="0.8"/>
<path d="M1274.6 563.5 l2.4 2.4 2.4 -2.4" fill="none" stroke="#8a8a8a" stroke-width="0.8"/>
<rect x="0" y="571.3" width="1280" height="6.7" fill="#f8f9fa"/>
<rect x="36" y="571.8" width="873" height="7" rx="3" fill="#dadce0"/>
<path d="M1253 574 l-1.5 1.5 1.5 1.5 M1266 574 l1.5 1.5 -1.5 1.5" fill="none" stroke="#888" stroke-width="0.7"/>
</svg>
<svg width="1280" height="578" style="left:0;top:0">
<clipPath id="viewclip"><rect x="34.8" y="125" width="1237.2" height="446.3"/></clipPath>
<g clip-path="url(#viewclip)">
<rect x="42.5" y="164.6" width="199.0" height="159.6" fill="#ffffff" stroke="#8c8799" stroke-width="1.1"/>
<rect x="246.4" y="164.6" width="216.99999999999997" height="159.6" fill="#ffffff" stroke="#8c8799" stroke-width="1.1"/>
<rect x="467.5" y="164.6" width="259.0" height="159.6" fill="#ffffff" stroke="#8c8799" stroke-width="1.1"/>
<rect x="730.4" y="164.6" width="271.9" height="159.6" fill="#ffffff" stroke="#8c8799" stroke-width="1.1"/>
<rect x="1005.5" y="164.6" width="284.5" height="159.6" fill="#ffffff" stroke="#8c8799" stroke-width="1.1"/>
<text x="63.5" y="181.4" font-family="Liberation Sans" font-weight="bold" font-size="10.5" fill="#111">Renovation Requests by Status</text>
<text x="274.1" y="181.9" font-family="Liberation Sans" font-weight="bold" font-size="10.5" fill="#111">Renovation Requests by Priority</text>
<text x="505.6" y="181.6" font-family="Liberation Sans" font-weight="bold" font-size="10.5" fill="#111">Estimated Cost (USD) by Department</text>
<text x="769.3" y="181.6" font-family="Liberation Sans" font-weight="bold" font-size="10.5" fill="#111">Estimated Cost (USD) Renovation Type</text>
<text x="1092.7" y="183.6" font-family="Liberation Sans" font-weight="bold" font-size="10.5" fill="#111">Estimated Cost (USD) Requested By</text>
<path d="M142.20 188.70 A50.7 50.7 0 0 1 185.66 265.51 L174.77 258.97 A38 38 0 0 0 142.20 201.40z" fill="#b4a7d6"/>
<path d="M185.66 265.51 A50.7 50.7 0 0 1 160.37 286.73 L155.82 274.88 A38 38 0 0 0 174.77 258.97z" fill="#351c75"/>
<path d="M160.37 286.73 A50.7 50.7 0 0 1 92.27 230.60 L104.78 232.80 A38 38 0 0 0 155.82 274.88z" fill="#d9d2e9"/>
<path d="M92.27 230.60 A50.7 50.7 0 0 1 142.20 188.70 L142.20 201.40 A38 38 0 0 0 104.78 232.80z" fill="#34a853"/>
<text transform="translate(142.2 244.7) scale(0.92 1)" font-family="Liberation Sans" font-weight="bold" font-size="28.6" fill="#351c75" text-anchor="middle">100</text>
<text x="170.4" y="276.8" font-family="Liberation Sans" font-weight="bold" font-size="10" fill="#ffffff" text-anchor="middle">9</text>
<circle cx="57" cy="300" r="4.6" fill="#b4a7d6"/>
<text x="67.8" y="302.6" font-family="Liberation Sans" font-weight="bold" font-size="7.4" fill="#333">In Progress</text>
<circle cx="124.8" cy="300" r="4.6" fill="#351c75"/>
<text x="136.1" y="302.6" font-family="Liberation Sans" font-weight="bold" font-size="7.4" fill="#333">Completed</text>
<circle cx="191.8" cy="300" r="4.6" fill="#d9d2e9"/>
<text x="202" y="302.6" font-family="Liberation Sans" font-weight="bold" font-size="7.4" fill="#333">Pending</text>
<circle cx="121.8" cy="311.7" r="4.6" fill="#34a853"/>
<text x="132.3" y="314.3" font-family="Liberation Sans" font-weight="bold" font-size="7.4" fill="#333">Approved</text>
<path d="M354.6 245.5 L354.60 188.50 A57 57 0 0 1 389.44 290.62z" fill="#8e7cc3"/>
<path d="M354.6 245.5 L389.44 290.62 A57 57 0 0 1 303.91 271.56z" fill="#073763"/>
<path d="M354.6 245.5 L303.91 271.56 A57 57 0 0 1 354.60 188.50z" fill="#d9d2e9"/>
<text x="394" y="235.3" font-family="Liberation Sans" font-weight="bold" font-size="11" fill="#ffffff" text-anchor="middle">34</text>
<text x="345.7" y="291.2" font-family="Liberation Sans" font-weight="bold" font-size="11" fill="#ffffff" text-anchor="middle">24</text>
<text x="319.6" y="227" font-family="Liberation Sans" font-weight="bold" font-size="11" fill="#111" text-anchor="middle">28</text>
<circle cx="295" cy="311.7" r="4.6" fill="#8e7cc3"/>
<text x="305" y="314.3" font-family="Liberation Sans" font-weight="bold" font-size="7.5" fill="#333">Medium</text>
<circle cx="351" cy="311.7" r="4.6" fill="#073763"/>
<text x="360.7" y="314.3" font-family="Liberation Sans" font-weight="bold" font-size="7.5" fill="#333">High</text>
<circle cx="394" cy="311.7" r="4.6" fill="#d9d2e9"/>
<text x="404.6" y="314.3" font-family="Liberation Sans" font-weight="bold" font-size="7.5" fill="#333">Low</text>
<text x="496.4" y="213.8" font-family="Liberation Sans" font-size="7.6" fill="#444" text-anchor="end" font-weight="bold">60000</text>
<text x="496.4" y="236.5" font-family="Liberation Sans" font-size="7.6" fill="#444" text-anchor="end" font-weight="bold">40000</text>
<text x="496.4" y="258.90000000000003" font-family="Liberation Sans" font-size="7.6" fill="#444" text-anchor="end" font-weight="bold">20000</text>
<text x="496.4" y="281.6" font-family="Liberation Sans" font-size="7.6" fill="#444" text-anchor="end" font-weight="bold">0</text>
<path d="M512.6 279.4 V223.8952053344499 q0 -1.5 1.5 -1.5 h19.2 q1.5 0 1.5 1.5 V279.4z" fill="#674ea7"/>
<text x="523.7" y="212.5952053344499" font-family="Liberation Sans" font-weight="bold" font-size="8" fill="#222" text-anchor="middle">50244.79</text>
<text transform="translate(528.2 287.2) rotate(-45)" x="0" y="0" font-family="Liberation Sans" font-weight="bold" font-size="7.9" fill="#222" text-anchor="end">Finance</text>
<path d="M547.1 279.4 V235.93908846031033 q0 -1.5 1.5 -1.5 h19.2 q1.5 0 1.5 1.5 V279.4z" fill="#674ea7"/>
<text x="558.2" y="224.63908846031032" font-family="Liberation Sans" font-weight="bold" font-size="8" fill="#222" text-anchor="middle">39629.15</text>
<text transform="translate(562.7 287.2) rotate(-45)" x="0" y="0" font-family="Liberation Sans" font-weight="bold" font-size="7.9" fill="#222" text-anchor="end">HR</text>
<path d="M581.5 279.4 V212.99999999999997 q0 -1.5 1.5 -1.5 h19.2 q1.5 0 1.5 1.5 V279.4z" fill="#674ea7"/>
<text x="592.6" y="201.69999999999996" font-family="Liberation Sans" font-weight="bold" font-size="8" fill="#222" text-anchor="middle">59847.97</text>
<text transform="translate(597.1 287.2) rotate(-45)" x="0" y="0" font-family="Liberation Sans" font-weight="bold" font-size="7.9" fill="#222" text-anchor="end">Admin</text>
<path d="M616 279.4 V242.1726219953659 q0 -1.5 1.5 -1.5 h19.2 q1.5 0 1.5 1.5 V279.4z" fill="#674ea7"/>
<text x="627.1" y="230.87262199536588" font-family="Liberation Sans" font-weight="bold" font-size="8" fill="#222" text-anchor="middle">34134.83</text>
<text transform="translate(631.6 287.2) rotate(-45)" x="0" y="0" font-family="Liberation Sans" font-weight="bold" font-size="7.9" fill="#222" text-anchor="end">Operations</text>
<path d="M650.4 279.4 V249.10539608945797 q0 -1.5 1.5 -1.5 h19.2 q1.5 0 1.5 1.5 V279.4z" fill="#674ea7"/>
<text x="661.5" y="237.80539608945796" font-family="Liberation Sans" font-weight="bold" font-size="8" fill="#222" text-anchor="middle">28024.19</text>
<text transform="translate(666.0 287.2) rotate(-45)" x="0" y="0" font-family="Liberation Sans" font-weight="bold" font-size="7.9" fill="#222" text-anchor="end">IT</text>
<path d="M685 279.4 V248.3850530602792 q0 -1.5 1.5 -1.5 h19.2 q1.5 0 1.5 1.5 V279.4z" fill="#674ea7"/>
<text x="696.1" y="237.0850530602792" font-family="Liberation Sans" font-weight="bold" font-size="8" fill="#222" text-anchor="middle">28659.11</text>
<text transform="translate(700.6 287.2) rotate(-45)" x="0" y="0" font-family="Liberation Sans" font-weight="bold" font-size="7.9" fill="#222" text-anchor="end">Marketing</text>
<rect x="819" y="197" width="119.42" height="13.1" rx="1.5" fill="#8e7cc3"/>
<text x="935.4217657429599" y="205.8" font-family="Liberation Sans" font-weight="bold" font-size="9.45" fill="#ffffff" text-anchor="end">40906.92</text>
<text x="814.5" y="205.5" font-family="Liberation Sans" font-weight="bold" font-size="7.45" fill="#222" text-anchor="end">Flooring</text>
<rect x="819" y="218" width="105.36" height="13.1" rx="1.5" fill="#8e7cc3"/>
<text x="921.3637350707754" y="226.8" font-family="Liberation Sans" font-weight="bold" font-size="9.45" fill="#ffffff" text-anchor="end">36091.46</text>
<text x="814.5" y="226.5" font-family="Liberation Sans" font-weight="bold" font-size="7.45" fill="#222" text-anchor="end">Electrical Work</text>
<rect x="819" y="239" width="158.50" height="13.1" rx="1.5" fill="#8e7cc3"/>
<text x="974.5" y="247.8" font-family="Liberation Sans" font-weight="bold" font-size="9.45" fill="#ffffff" text-anchor="end">54292.84</text>
<text x="814.5" y="247.5" font-family="Liberation Sans" font-weight="bold" font-size="7.45" fill="#222" text-anchor="end">Lighting</text>
<rect x="819" y="260.5" width="126.41" height="13.1" rx="1.5" fill="#8e7cc3"/>
<text x="942.4062901296008" y="269.3" font-family="Liberation Sans" font-weight="bold" font-size="9.45" fill="#ffffff" text-anchor="end">43299.41</text>
<text x="814.5" y="269.0" font-family="Liberation Sans" font-weight="bold" font-size="7.45" fill="#222" text-anchor="end">Painting</text>
<rect x="819" y="281.5" width="103.26" height="13.1" rx="1.5" fill="#8e7cc3"/>
<text x="919.2602531936071" y="290.3" font-family="Liberation Sans" font-weight="bold" font-size="9.45" fill="#ffffff" text-anchor="end">35370.93</text>
<text x="814.5" y="290.0" font-family="Liberation Sans" font-weight="bold" font-size="7.45" fill="#222" text-anchor="end">Air Conditioning</text>
<rect x="819" y="302.5" width="89.27" height="13.1" rx="1.5" fill="#8e7cc3"/>
<text x="905.2693968486452" y="311.3" font-family="Liberation Sans" font-weight="bold" font-size="9.45" fill="#ffffff" text-anchor="end">30578.48</text>
<text x="814.5" y="311.0" font-family="Liberation Sans" font-weight="bold" font-size="7.45" fill="#222" text-anchor="end">Furniture</text>
<text x="1034.5" y="196.6" font-family="Liberation Sans" font-size="7.5" fill="#444" text-anchor="end" font-weight="bold">25000</text>
<text x="1034.5" y="213.5" font-family="Liberation Sans" font-size="7.5" fill="#444" text-anchor="end" font-weight="bold">20000</text>
<text x="1034.5" y="230.29999999999998" font-family="Liberation Sans" font-size="7.5" fill="#444" text-anchor="end" font-weight="bold">15000</text>
<text x="1034.5" y="247.2" font-family="Liberation Sans" font-size="7.5" fill="#444" text-anchor="end" font-weight="bold">10000</text>
<text x="1034.5" y="264.0" font-family="Liberation Sans" font-size="7.5" fill="#444" text-anchor="end" font-weight="bold">5000</text>
<text x="1034.5" y="280.90000000000003" font-family="Liberation Sans" font-size="7.5" fill="#444" text-anchor="end" font-weight="bold">0</text>
<path d="M1047.2 278.8 V220.28276344 q0 -1.5 1.5 -1.5 h12 q1.5 0 1.5 1.5 V278.8z" fill="#674ea7"/>
<path d="M1071.1000000000001 278.8 V223.15736992 q0 -1.5 1.5 -1.5 h12 q1.5 0 1.5 1.5 V278.8z" fill="#674ea7"/>
<path d="M1095.0 278.8 V220.97702488000002 q0 -1.5 1.5 -1.5 h12 q1.5 0 1.5 1.5 V278.8z" fill="#674ea7"/>
<path d="M1118.9 278.8 V208.72329016000003 q0 -1.5 1.5 -1.5 h12 q1.5 0 1.5 1.5 V278.8z" fill="#674ea7"/>
<path d="M1142.8 278.8 V218.574994 q0 -1.5 1.5 -1.5 h12 q1.5 0 1.5 1.5 V278.8z" fill="#674ea7"/>
<path d="M1166.7 278.8 V201.26495416 q0 -1.5 1.5 -1.5 h12 q1.5 0 1.5 1.5 V278.8z" fill="#674ea7"/>
<path d="M1190.6 278.8 V212.76006376 q0 -1.5 1.5 -1.5 h12 q1.5 0 1.5 1.5 V278.8z" fill="#674ea7"/>
<path d="M1214.5 278.8 V208.32347056000003 q0 -1.5 1.5 -1.5 h12 q1.5 0 1.5 1.5 V278.8z" fill="#674ea7"/>
<path d="M1238.4 278.8 V233.58621496 q0 -1.5 1.5 -1.5 h12 q1.5 0 1.5 1.5 V278.8z" fill="#674ea7"/>
<path d="M1262.3 278.8 V216.734944 q0 -1.5 1.5 -1.5 h12 q1.5 0 1.5 1.5 V278.8z" fill="#674ea7"/>
<path d="M1286.2 278.8 V212.62 q0 -1.5 1.5 -1.5 h12 q1.5 0 1.5 1.5 V278.8z" fill="#674ea7"/>
<text x="1055.0" y="209.18276344" font-family="Liberation Sans" font-weight="bold" font-size="8" fill="#222" stroke="#fff" stroke-width="2.2" paint-order="stroke" text-anchor="middle">17735.59</text>
<text x="1078.9" y="212.05736992" font-family="Liberation Sans" font-weight="bold" font-size="8" fill="#222" stroke="#fff" stroke-width="2.2" paint-order="stroke" text-anchor="middle">16886.12</text>
<text x="1102.8" y="209.87702488000002" font-family="Liberation Sans" font-weight="bold" font-size="8" fill="#222" stroke="#fff" stroke-width="2.2" paint-order="stroke" text-anchor="middle">17530.43</text>
<text x="1126.7" y="197.62329016000004" font-family="Liberation Sans" font-weight="bold" font-size="8" fill="#222" stroke="#fff" stroke-width="2.2" paint-order="stroke" text-anchor="middle">21151.51</text>
<text x="1150.6" y="207.474994" font-family="Liberation Sans" font-weight="bold" font-size="8" fill="#222" stroke="#fff" stroke-width="2.2" paint-order="stroke" text-anchor="middle">18240.25</text>
<text x="1174.5" y="190.16495416" font-family="Liberation Sans" font-weight="bold" font-size="8" fill="#222" stroke="#fff" stroke-width="2.2" paint-order="stroke" text-anchor="middle">23355.51</text>
<text x="1198.3999999999999" y="201.66006376" font-family="Liberation Sans" font-weight="bold" font-size="8" fill="#222" stroke="#fff" stroke-width="2.2" paint-order="stroke" text-anchor="middle">19958.61</text>
<text x="1222.3" y="197.22347056000004" font-family="Liberation Sans" font-weight="bold" font-size="8" fill="#222" stroke="#fff" stroke-width="2.2" paint-order="stroke" text-anchor="middle">21269.66</text>
<text x="1246.2" y="222.48621496" font-family="Liberation Sans" font-weight="bold" font-size="8" fill="#222" stroke="#fff" stroke-width="2.2" paint-order="stroke" text-anchor="middle">13804.31</text>
<text x="1270.1" y="205.63494400000002" font-family="Liberation Sans" font-weight="bold" font-size="8" fill="#222" stroke="#fff" stroke-width="2.2" paint-order="stroke" text-anchor="middle">18784.00</text>
<text transform="translate(1059.0 287.0) rotate(-45)" x="0" y="0" font-family="Liberation Sans" font-weight="bold" font-size="7.6" fill="#222" text-anchor="end">Employee 1</text>
<text transform="translate(1082.9 287.0) rotate(-45)" x="0" y="0" font-family="Liberation Sans" font-weight="bold" font-size="7.6" fill="#222" text-anchor="end">Employee 2</text>
<text transform="translate(1106.8 287.0) rotate(-45)" x="0" y="0" font-family="Liberation Sans" font-weight="bold" font-size="7.6" fill="#222" text-anchor="end">Employee 3</text>
<text transform="translate(1130.7 287.0) rotate(-45)" x="0" y="0" font-family="Liberation Sans" font-weight="bold" font-size="7.6" fill="#222" text-anchor="end">Employee 4</text>
<text transform="translate(1154.6 287.0) rotate(-45)" x="0" y="0" font-family="Liberation Sans" font-weight="bold" font-size="7.6" fill="#222" text-anchor="end">Employee 5</text>
<text transform="translate(1178.5 287.0) rotate(-45)" x="0" y="0" font-family="Liberation Sans" font-weight="bold" font-size="7.6" fill="#222" text-anchor="end">Employee 6</text>
<text transform="translate(1202.3999999999999 287.0) rotate(-45)" x="0" y="0" font-family="Liberation Sans" font-weight="bold" font-size="7.6" fill="#222" text-anchor="end">Employee 7</text>
<text transform="translate(1226.3 287.0) rotate(-45)" x="0" y="0" font-family="Liberation Sans" font-weight="bold" font-size="7.6" fill="#222" text-anchor="end">Employee 8</text>
<text transform="translate(1250.2 287.0) rotate(-45)" x="0" y="0" font-family="Liberation Sans" font-weight="bold" font-size="7.6" fill="#222" text-anchor="end">Employee 9</text>
<text transform="translate(1274.1 287.0) rotate(-45)" x="0" y="0" font-family="Liberation Sans" font-weight="bold" font-size="7.6" fill="#222" text-anchor="end">Employee...</text>
<text transform="translate(1298.0 287.0) rotate(-45)" x="0" y="0" font-family="Liberation Sans" font-weight="bold" font-size="7.6" fill="#222" text-anchor="end">Employee</text>
</g>
</svg>
<div class="a" style="left:46px;top:9.8px;font-size:13.45px;color:#1f1f1f;line-height:18px">Office Renovation Request Tracker in Google Sheets</div>
<div class="a" style="left:47px;top:28px;font-size:10.6px;color:#444746;line-height:14px">File</div>
<div class="a" style="left:75.2px;top:28px;font-size:10.6px;color:#444746;line-height:14px">Edit</div>
<div class="a" style="left:106.6px;top:28px;font-size:10.6px;color:#444746;line-height:14px">View</div>
<div class="a" style="left:140.7px;top:28px;font-size:10.6px;color:#444746;line-height:14px">Insert</div>
<div class="a" style="left:181.2px;top:28px;font-size:10.6px;color:#444746;line-height:14px">Format</div>
<div class="a" style="left:227.8px;top:28px;font-size:10.6px;color:#444746;line-height:14px">Data</div>
<div class="a" style="left:263px;top:28px;font-size:10.6px;color:#444746;line-height:14px">Tools</div>
<div class="a" style="left:300px;top:28px;font-size:10.6px;color:#444746;line-height:14px">Extensions</div>
<div class="a" style="left:364.8px;top:28px;font-size:10.6px;color:#444746;line-height:14px">Help</div>
<div class="a" style="left:46px;top:57px;font-size:10.6px;color:#5f6368;line-height:14px">Menus</div>
<div class="a" style="left:197px;top:57.5px;font-size:10.5px;color:#444746;line-height:14px">100%</div>
<div class="a" style="left:262px;top:57px;font-size:10px;color:#444746;line-height:14px;font-weight:bold">$</div>
<div class="a" style="left:284px;top:57px;font-size:10px;color:#444746;line-height:14px">%</div>
<div class="a" style="left:305.5px;top:56.5px;font-size:10px;color:#444746;line-height:14px;font-weight:bold;letter-spacing:-0.3px">.0</div>
<div class="a" style="left:330px;top:56.5px;font-size:10px;color:#444746;line-height:14px;font-weight:bold;letter-spacing:-0.6px">.00</div>
<div class="a" style="left:354px;top:57.5px;font-size:9.6px;color:#444746;line-height:14px;transform:scaleX(0.95);transform-origin:left">123</div>
<div class="a" style="left:388px;top:57px;font-size:10.6px;color:#444746;line-height:14px">Defaul...</div>
<div class="a" style="left:485.5px;top:57.5px;font-size:10px;color:#1f1f1f;line-height:14px">10</div>
<div class="a" style="left:538.5px;top:57.5px;font-size:10.5px;color:#444746;line-height:14px;font-weight:bold">B</div>
<div class="a" style="left:1135px;top:15.5px;font-size:11.2px;color:#001d35;line-height:14px">Share</div>
<svg width="12" height="8" style="left:313px;top:67px"><path d="M1.5 2.5 h5 M3.3 0.8 l-1.8 1.7 1.8 1.7" fill="none" stroke="#444746" stroke-width="1.2"/></svg>
<svg width="12" height="8" style="left:336px;top:67px"><path d="M1 2.5 h5 M4.2 0.8 l1.8 1.7 -1.8 1.7" fill="none" stroke="#444746" stroke-width="1.2"/></svg>
</body></html>
